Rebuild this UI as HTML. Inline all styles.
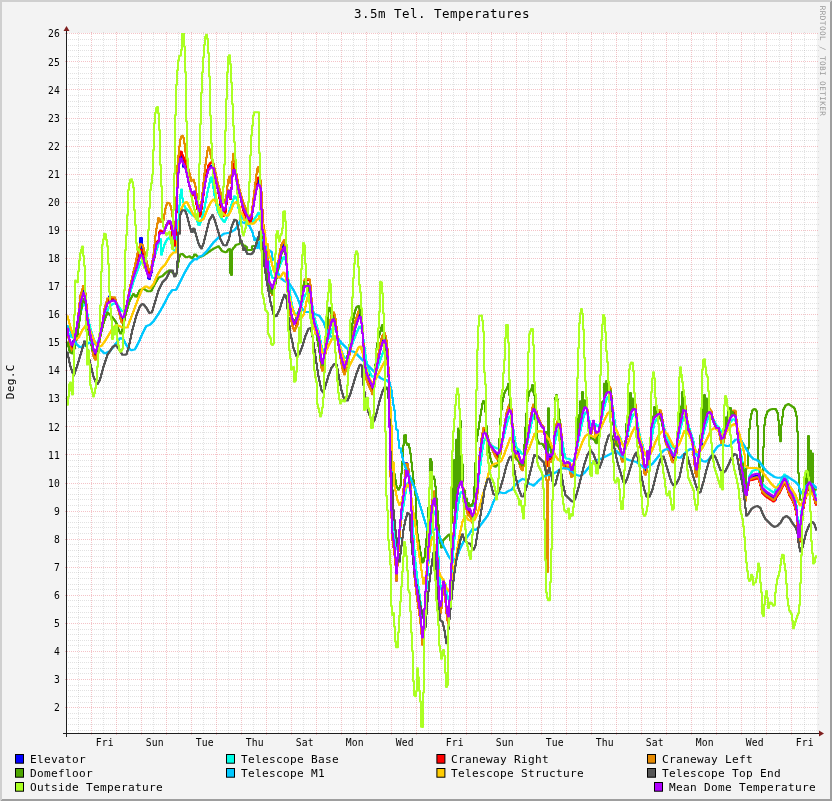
<!DOCTYPE html>
<html><head><meta charset="utf-8"><title>3.5m Tel. Temperatures</title>
<style>html,body{margin:0;padding:0;background:#f3f3f3;}body{width:832px;height:801px;overflow:hidden;}svg{display:block;will-change:transform;}text{font-family:"DejaVu Sans Mono","Liberation Mono",monospace;fill:#000;}.ax{font-size:9.72px;letter-spacing:0.15px;}.lg{font-size:11.11px;letter-spacing:0.31px;}.ti{font-size:12.5px;letter-spacing:0.47px;}.wm{font-size:7.64px;fill:#999;letter-spacing:0.43px;}.s{fill:none;stroke-width:2;stroke-linejoin:round;stroke-linecap:round;}</style></head><body>
<svg width="832" height="801" viewBox="0 0 832 801">
<rect x="0" y="0" width="832" height="801" fill="#f3f3f3"/>
<g shape-rendering="crispEdges">
<polygon points="0,0 832,0 830,2 2,2 2,799 0,801" fill="#cfcfcf"/>
<polygon points="832,801 0,801 2,799 830,799 830,2 832,0" fill="#9e9e9e"/>
<rect x="67" y="33" width="750" height="700" fill="#ffffff"/>
<g fill="none" stroke-width="1" stroke-dasharray="1 1"><path d="M66,730.5H819" stroke="rgba(143,143,143,0.26)"/><path d="M66,724.5H819" stroke="rgba(143,143,143,0.26)"/><path d="M66,718.5H819" stroke="rgba(143,143,143,0.26)"/><path d="M66,713.5H819" stroke="rgba(143,143,143,0.26)"/><path d="M66,702.5H819" stroke="rgba(143,143,143,0.26)"/><path d="M66,696.5H819" stroke="rgba(143,143,143,0.26)"/><path d="M66,690.5H819" stroke="rgba(143,143,143,0.26)"/><path d="M66,685.5H819" stroke="rgba(143,143,143,0.26)"/><path d="M66,673.5H819" stroke="rgba(143,143,143,0.26)"/><path d="M66,668.5H819" stroke="rgba(143,143,143,0.26)"/><path d="M66,662.5H819" stroke="rgba(143,143,143,0.26)"/><path d="M66,657.5H819" stroke="rgba(143,143,143,0.26)"/><path d="M66,645.5H819" stroke="rgba(143,143,143,0.26)"/><path d="M66,640.5H819" stroke="rgba(143,143,143,0.26)"/><path d="M66,634.5H819" stroke="rgba(143,143,143,0.26)"/><path d="M66,629.5H819" stroke="rgba(143,143,143,0.26)"/><path d="M66,617.5H819" stroke="rgba(143,143,143,0.26)"/><path d="M66,612.5H819" stroke="rgba(143,143,143,0.26)"/><path d="M66,606.5H819" stroke="rgba(143,143,143,0.26)"/><path d="M66,600.5H819" stroke="rgba(143,143,143,0.26)"/><path d="M66,589.5H819" stroke="rgba(143,143,143,0.26)"/><path d="M66,584.5H819" stroke="rgba(143,143,143,0.26)"/><path d="M66,578.5H819" stroke="rgba(143,143,143,0.26)"/><path d="M66,572.5H819" stroke="rgba(143,143,143,0.26)"/><path d="M66,561.5H819" stroke="rgba(143,143,143,0.26)"/><path d="M66,556.5H819" stroke="rgba(143,143,143,0.26)"/><path d="M66,550.5H819" stroke="rgba(143,143,143,0.26)"/><path d="M66,544.5H819" stroke="rgba(143,143,143,0.26)"/><path d="M66,533.5H819" stroke="rgba(143,143,143,0.26)"/><path d="M66,527.5H819" stroke="rgba(143,143,143,0.26)"/><path d="M66,522.5H819" stroke="rgba(143,143,143,0.26)"/><path d="M66,516.5H819" stroke="rgba(143,143,143,0.26)"/><path d="M66,505.5H819" stroke="rgba(143,143,143,0.26)"/><path d="M66,499.5H819" stroke="rgba(143,143,143,0.26)"/><path d="M66,494.5H819" stroke="rgba(143,143,143,0.26)"/><path d="M66,488.5H819" stroke="rgba(143,143,143,0.26)"/><path d="M66,477.5H819" stroke="rgba(143,143,143,0.26)"/><path d="M66,471.5H819" stroke="rgba(143,143,143,0.26)"/><path d="M66,466.5H819" stroke="rgba(143,143,143,0.26)"/><path d="M66,460.5H819" stroke="rgba(143,143,143,0.26)"/><path d="M66,449.5H819" stroke="rgba(143,143,143,0.26)"/><path d="M66,443.5H819" stroke="rgba(143,143,143,0.26)"/><path d="M66,438.5H819" stroke="rgba(143,143,143,0.26)"/><path d="M66,432.5H819" stroke="rgba(143,143,143,0.26)"/><path d="M66,421.5H819" stroke="rgba(143,143,143,0.26)"/><path d="M66,415.5H819" stroke="rgba(143,143,143,0.26)"/><path d="M66,410.5H819" stroke="rgba(143,143,143,0.26)"/><path d="M66,404.5H819" stroke="rgba(143,143,143,0.26)"/><path d="M66,393.5H819" stroke="rgba(143,143,143,0.26)"/><path d="M66,387.5H819" stroke="rgba(143,143,143,0.26)"/><path d="M66,381.5H819" stroke="rgba(143,143,143,0.26)"/><path d="M66,376.5H819" stroke="rgba(143,143,143,0.26)"/><path d="M66,365.5H819" stroke="rgba(143,143,143,0.26)"/><path d="M66,359.5H819" stroke="rgba(143,143,143,0.26)"/><path d="M66,353.5H819" stroke="rgba(143,143,143,0.26)"/><path d="M66,348.5H819" stroke="rgba(143,143,143,0.26)"/><path d="M66,337.5H819" stroke="rgba(143,143,143,0.26)"/><path d="M66,331.5H819" stroke="rgba(143,143,143,0.26)"/><path d="M66,325.5H819" stroke="rgba(143,143,143,0.26)"/><path d="M66,320.5H819" stroke="rgba(143,143,143,0.26)"/><path d="M66,308.5H819" stroke="rgba(143,143,143,0.26)"/><path d="M66,303.5H819" stroke="rgba(143,143,143,0.26)"/><path d="M66,297.5H819" stroke="rgba(143,143,143,0.26)"/><path d="M66,292.5H819" stroke="rgba(143,143,143,0.26)"/><path d="M66,280.5H819" stroke="rgba(143,143,143,0.26)"/><path d="M66,275.5H819" stroke="rgba(143,143,143,0.26)"/><path d="M66,269.5H819" stroke="rgba(143,143,143,0.26)"/><path d="M66,264.5H819" stroke="rgba(143,143,143,0.26)"/><path d="M66,252.5H819" stroke="rgba(143,143,143,0.26)"/><path d="M66,247.5H819" stroke="rgba(143,143,143,0.26)"/><path d="M66,241.5H819" stroke="rgba(143,143,143,0.26)"/><path d="M66,235.5H819" stroke="rgba(143,143,143,0.26)"/><path d="M66,224.5H819" stroke="rgba(143,143,143,0.26)"/><path d="M66,219.5H819" stroke="rgba(143,143,143,0.26)"/><path d="M66,213.5H819" stroke="rgba(143,143,143,0.26)"/><path d="M66,207.5H819" stroke="rgba(143,143,143,0.26)"/><path d="M66,196.5H819" stroke="rgba(143,143,143,0.26)"/><path d="M66,191.5H819" stroke="rgba(143,143,143,0.26)"/><path d="M66,185.5H819" stroke="rgba(143,143,143,0.26)"/><path d="M66,179.5H819" stroke="rgba(143,143,143,0.26)"/><path d="M66,168.5H819" stroke="rgba(143,143,143,0.26)"/><path d="M66,162.5H819" stroke="rgba(143,143,143,0.26)"/><path d="M66,157.5H819" stroke="rgba(143,143,143,0.26)"/><path d="M66,151.5H819" stroke="rgba(143,143,143,0.26)"/><path d="M66,140.5H819" stroke="rgba(143,143,143,0.26)"/><path d="M66,134.5H819" stroke="rgba(143,143,143,0.26)"/><path d="M66,129.5H819" stroke="rgba(143,143,143,0.26)"/><path d="M66,123.5H819" stroke="rgba(143,143,143,0.26)"/><path d="M66,112.5H819" stroke="rgba(143,143,143,0.26)"/><path d="M66,106.5H819" stroke="rgba(143,143,143,0.26)"/><path d="M66,101.5H819" stroke="rgba(143,143,143,0.26)"/><path d="M66,95.5H819" stroke="rgba(143,143,143,0.26)"/><path d="M66,84.5H819" stroke="rgba(143,143,143,0.26)"/><path d="M66,78.5H819" stroke="rgba(143,143,143,0.26)"/><path d="M66,73.5H819" stroke="rgba(143,143,143,0.26)"/><path d="M66,67.5H819" stroke="rgba(143,143,143,0.26)"/><path d="M66,56.5H819" stroke="rgba(143,143,143,0.26)"/><path d="M66,50.5H819" stroke="rgba(143,143,143,0.26)"/><path d="M66,45.5H819" stroke="rgba(143,143,143,0.26)"/><path d="M66,39.5H819" stroke="rgba(143,143,143,0.26)"/><path d="M78.5,32V734" stroke="rgba(143,143,143,0.26)"/><path d="M103.5,32V734" stroke="rgba(143,143,143,0.26)"/><path d="M128.5,32V734" stroke="rgba(143,143,143,0.26)"/><path d="M153.5,32V734" stroke="rgba(143,143,143,0.26)"/><path d="M178.5,32V734" stroke="rgba(143,143,143,0.26)"/><path d="M203.5,32V734" stroke="rgba(143,143,143,0.26)"/><path d="M228.5,32V734" stroke="rgba(143,143,143,0.26)"/><path d="M253.5,32V734" stroke="rgba(143,143,143,0.26)"/><path d="M278.5,32V734" stroke="rgba(143,143,143,0.26)"/><path d="M303.5,32V734" stroke="rgba(143,143,143,0.26)"/><path d="M328.5,32V734" stroke="rgba(143,143,143,0.26)"/><path d="M353.5,32V734" stroke="rgba(143,143,143,0.26)"/><path d="M378.5,32V734" stroke="rgba(143,143,143,0.26)"/><path d="M403.5,32V734" stroke="rgba(143,143,143,0.26)"/><path d="M428.5,32V734" stroke="rgba(143,143,143,0.26)"/><path d="M453.5,32V734" stroke="rgba(143,143,143,0.26)"/><path d="M478.5,32V734" stroke="rgba(143,143,143,0.26)"/><path d="M503.5,32V734" stroke="rgba(143,143,143,0.26)"/><path d="M528.5,32V734" stroke="rgba(143,143,143,0.26)"/><path d="M553.5,32V734" stroke="rgba(143,143,143,0.26)"/><path d="M578.5,32V734" stroke="rgba(143,143,143,0.26)"/><path d="M603.5,32V734" stroke="rgba(143,143,143,0.26)"/><path d="M628.5,32V734" stroke="rgba(143,143,143,0.26)"/><path d="M653.5,32V734" stroke="rgba(143,143,143,0.26)"/><path d="M678.5,32V734" stroke="rgba(143,143,143,0.26)"/><path d="M703.5,32V734" stroke="rgba(143,143,143,0.26)"/><path d="M728.5,32V734" stroke="rgba(143,143,143,0.26)"/><path d="M754.5,32V734" stroke="rgba(143,143,143,0.26)"/><path d="M779.5,32V734" stroke="rgba(143,143,143,0.26)"/><path d="M804.5,32V734" stroke="rgba(143,143,143,0.26)"/><path d="M65,707.5H819" stroke="rgba(222,79,90,0.34)"/><path d="M65,679.5H819" stroke="rgba(222,79,90,0.34)"/><path d="M65,651.5H819" stroke="rgba(222,79,90,0.34)"/><path d="M65,623.5H819" stroke="rgba(222,79,90,0.34)"/><path d="M65,595.5H819" stroke="rgba(222,79,90,0.34)"/><path d="M65,567.5H819" stroke="rgba(222,79,90,0.34)"/><path d="M65,539.5H819" stroke="rgba(222,79,90,0.34)"/><path d="M65,511.5H819" stroke="rgba(222,79,90,0.34)"/><path d="M65,483.5H819" stroke="rgba(222,79,90,0.34)"/><path d="M65,454.5H819" stroke="rgba(222,79,90,0.34)"/><path d="M65,426.5H819" stroke="rgba(222,79,90,0.34)"/><path d="M65,398.5H819" stroke="rgba(222,79,90,0.34)"/><path d="M65,370.5H819" stroke="rgba(222,79,90,0.34)"/><path d="M65,342.5H819" stroke="rgba(222,79,90,0.34)"/><path d="M65,314.5H819" stroke="rgba(222,79,90,0.34)"/><path d="M65,286.5H819" stroke="rgba(222,79,90,0.34)"/><path d="M65,258.5H819" stroke="rgba(222,79,90,0.34)"/><path d="M65,230.5H819" stroke="rgba(222,79,90,0.34)"/><path d="M65,202.5H819" stroke="rgba(222,79,90,0.34)"/><path d="M65,174.5H819" stroke="rgba(222,79,90,0.34)"/><path d="M65,146.5H819" stroke="rgba(222,79,90,0.34)"/><path d="M65,118.5H819" stroke="rgba(222,79,90,0.34)"/><path d="M65,89.5H819" stroke="rgba(222,79,90,0.34)"/><path d="M65,61.5H819" stroke="rgba(222,79,90,0.34)"/><path d="M65,33.5H819" stroke="rgba(222,79,90,0.34)"/><path d="M91.5,32V735" stroke="rgba(222,79,90,0.34)"/><path d="M116.5,32V735" stroke="rgba(222,79,90,0.34)"/><path d="M141.5,32V735" stroke="rgba(222,79,90,0.34)"/><path d="M166.5,32V735" stroke="rgba(222,79,90,0.34)"/><path d="M191.5,32V735" stroke="rgba(222,79,90,0.34)"/><path d="M216.5,32V735" stroke="rgba(222,79,90,0.34)"/><path d="M241.5,32V735" stroke="rgba(222,79,90,0.34)"/><path d="M266.5,32V735" stroke="rgba(222,79,90,0.34)"/><path d="M291.5,32V735" stroke="rgba(222,79,90,0.34)"/><path d="M316.5,32V735" stroke="rgba(222,79,90,0.34)"/><path d="M341.5,32V735" stroke="rgba(222,79,90,0.34)"/><path d="M366.5,32V735" stroke="rgba(222,79,90,0.34)"/><path d="M391.5,32V735" stroke="rgba(222,79,90,0.34)"/><path d="M416.5,32V735" stroke="rgba(222,79,90,0.34)"/><path d="M441.5,32V735" stroke="rgba(222,79,90,0.34)"/><path d="M466.5,32V735" stroke="rgba(222,79,90,0.34)"/><path d="M491.5,32V735" stroke="rgba(222,79,90,0.34)"/><path d="M516.5,32V735" stroke="rgba(222,79,90,0.34)"/><path d="M541.5,32V735" stroke="rgba(222,79,90,0.34)"/><path d="M566.5,32V735" stroke="rgba(222,79,90,0.34)"/><path d="M591.5,32V735" stroke="rgba(222,79,90,0.34)"/><path d="M616.5,32V735" stroke="rgba(222,79,90,0.34)"/><path d="M641.5,32V735" stroke="rgba(222,79,90,0.34)"/><path d="M666.5,32V735" stroke="rgba(222,79,90,0.34)"/><path d="M691.5,32V735" stroke="rgba(222,79,90,0.34)"/><path d="M716.5,32V735" stroke="rgba(222,79,90,0.34)"/><path d="M741.5,32V735" stroke="rgba(222,79,90,0.34)"/><path d="M766.5,32V735" stroke="rgba(222,79,90,0.34)"/><path d="M791.5,32V735" stroke="rgba(222,79,90,0.34)"/></g>
</g>
<g clip-path="url(#cp)"><defs><clipPath id="cp"><rect x="67" y="33" width="751" height="701"/></clipPath></defs><path class="s" stroke="#0000ff" d="M67,328.3H68V336.1H69V340.3H70V343.3H71V346.4H72V351.6H73V341.0H74V341.3H75V335.0H76V328.7H77V322.3H78V315.1H79V307.8H80V300.6H81V297.3H82V293.9H83V290.6H84V293.4H85V298.2H86V309.0H87V319.6H88V325.0H89V330.4H90V335.8H91V340.8H92V345.8H93V350.7H94V353.2H95V354.8H96V351.3H97V347.9H98V343.6H99V338.6H100V333.7H101V328.5H102V322.8H103V317.1H104V311.6H105V308.5H106V305.5H107V302.6H108V302.0H109V296.4H110V297.8H111V300.3H112V300.2H113V300.0H114V299.9H115V301.3H116V303.9H117V306.4H118V309.3H119V312.2H120V315.2H121V317.4H122V318.1H123V318.7H124V315.3H125V311.1H126V306.7H127V301.8H128V296.9H129V292.0H130V287.8H131V284.0H132V280.2H133V276.4H134V273.2H135V270.0H136V266.9H137V263.8H138V260.3H139V256.8H140V238.0H141V238.0H142V255.0H143V258.1H144V262.8H145V267.5H146V267.7H147V272.0H148V278.2H149V279.1H150V275.8H151V272.5H152V265.7H153V259.2H154V256.3H155V248.7H156V243.6H157V242.4H158V241.1H159V233.5H160V232.1H161V232.4H162V232.9H163V233.0H164V230.4H165V227.7H166V225.3H167V223.5H168V221.6H169V221.3H170V222.6H171V226.6H172V232.2H173V237.0H174V241.5H175V230.3H176V210.8H177V187.1H178V171.0H179V160.9H180V155.6H181V156.2H182V159.6H183V166.7H184V160.6H185V166.9H186V171.3H187V176.5H188V181.9H189V185.9H190V189.4H191V192.1H192V194.2H193V192.9H194V191.8H195V197.1H196V202.2H197V206.5H198V210.1H199V212.8H200V211.1H201V206.3H202V200.3H203V193.9H204V187.6H205V181.3H206V176.2H207V172.1H208V168.4H209V167.3H210V166.2H211V165.7H212V166.1H213V167.1H214V172.5H215V177.9H216V183.3H217V188.0H218V192.5H219V196.8H220V204.9H221V202.0H222V208.6H223V212.2H224V211.2H225V209.0H226V202.5H227V196.2H228V190.8H229V191.9H230V198.4H231V188.5H232V174.9H233V167.9H234V167.9H235V172.9H236V178.3H237V183.7H238V188.8H239V192.9H240V197.0H241V201.4H242V205.8H243V209.2H244V211.3H245V213.4H246V215.6H247V217.7H248V219.9H249V220.3H250V218.9H251V217.1H252V211.6H253V205.8H254V199.1H255V192.8H256V187.2H257V179.3H258V184.5H259V182.2H260V184.7H261V207.5H262V229.5H263V233.2H264V247.2H265V252.6H266V269.5H267V262.8H268V273.8H269V284.4H270V286.4H271V288.4H272V290.1H273V286.3H274V282.5H275V278.7H276V273.5H277V268.3H278V263.1H279V258.6H280V254.1H281V249.7H282V247.8H283V245.9H284V244.4H285V250.4H286V262.0H287V280.0H288V291.8H289V303.3H290V309.9H291V316.4H292V321.2H293V323.8H294V321.0H295V320.8H296V321.5H297V319.1H298V315.4H299V311.7H300V307.8H301V301.4H302V295.0H303V290.0H304V285.6H305V284.2H306V284.1H307V284.1H308V284.0H309V284.3H310V290.4H311V302.0H312V312.4H313V318.8H314V323.7H315V327.2H316V330.7H317V334.1H318V337.6H319V342.1H320V355.9H321V362.9H322V365.9H323V360.4H324V354.9H325V349.4H326V343.9H327V338.8H328V333.7H329V328.7H330V324.5H331V324.2H332V314.8H333V317.2H334V319.5H335V324.3H336V330.6H337V338.2H338V344.6H339V350.0H340V354.9H341V359.2H342V363.1H343V366.7H344V369.4H345V366.2H346V362.9H347V359.3H348V355.8H349V352.1H350V347.8H351V343.5H352V339.1H353V334.7H354V330.4H355V326.2H356V322.9H357V319.6H358V316.5H359V314.8H360V314.3H361V321.0H362V331.5H363V345.6H364V360.9H365V368.8H366V374.1H367V377.2H368V374.6H369V379.0H370V384.1H371V386.3H372V389.4H373V385.9H374V380.4H375V374.6H376V368.7H377V362.9H378V357.5H379V352.1H380V347.2H381V342.6H382V338.5H383V336.6H384V334.6H385V336.9H386V341.4H387V350.3H388V369.4H389V425.8H390V471.2H391V515.0H392V539.1H393V546.2H394V553.8H395V564.3H396V580.6H397V564.6H398V548.2H399V532.4H400V521.0H401V509.7H402V501.7H403V493.7H404V483.7H405V469.9H406V463.0H407V466.3H408V471.6H409V479.0H410V486.8H411V508.6H412V540.1H413V557.5H414V571.3H415V580.9H416V589.5H417V596.9H418V604.3H419V611.7H420V620.6H421V631.5H422V643.3H423V633.9H424V612.3H425V593.4H426V576.1H427V560.1H428V544.9H429V531.1H430V518.2H431V508.2H432V499.6H433V495.0H434V493.0H435V501.2H436V524.5H437V559.6H438V587.7H439V604.7H440V609.2H441V604.0H442V586.1H443V586.2H444V586.5H445V597.4H446V609.8H447V617.5H448V621.1H449V603.6H450V582.3H451V564.7H452V549.0H453V535.3H454V521.7H455V510.1H456V498.8H457V491.5H458V484.6H459V481.9H460V479.8H461V478.9H462V485.5H463V492.9H464V498.1H465V502.4H466V507.2H467V509.7H468V511.0H469V509.8H470V511.7H471V516.2H472V517.9H473V515.6H474V511.4H475V504.8H476V494.5H477V489.3H478V474.3H479V455.9H480V448.1H481V442.3H482V437.2H483V432.7H484V432.3H485V432.2H486V434.9H487V437.7H488V440.9H489V443.9H490V445.3H491V446.9H492V448.4H493V450.0H494V451.5H495V452.9H496V453.7H497V454.5H498V454.9H499V452.8H500V450.2H501V444.8H502V439.2H503V432.9H504V426.8H505V421.6H506V416.3H507V413.2H508V410.8H509V408.9H510V410.0H511V412.9H512V426.3H513V442.8H514V451.7H515V453.5H516V451.0H517V451.4H518V454.6H519V458.4H520V461.9H521V464.1H522V465.1H523V460.8H524V456.2H525V450.5H526V444.8H527V439.0H528V432.5H529V426.2H530V420.5H531V415.4H532V410.7H533V408.0H534V408.6H535V411.2H536V413.5H537V417.4H538V419.5H539V421.6H540V423.6H541V425.6H542V426.7H543V427.8H544V433.8H545V444.0H546V454.5H547V461.8H548V457.1H549V455.8H550V456.3H551V456.9H552V455.1H553V454.9H554V438.3H555V431.1H556V427.0H557V424.9H558V422.9H559V423.5H560V427.5H561V436.1H562V454.2H563V462.1H564V464.3H565V464.5H566V463.7H567V463.0H568V463.6H569V464.3H570V468.1H571V471.7H572V471.0H573V466.8H574V460.7H575V454.4H576V448.0H577V441.6H578V435.3H579V429.1H580V423.0H581V417.9H582V412.9H583V409.8H584V406.9H585V406.3H586V407.8H587V412.0H588V421.0H589V428.5H590V438.4H591V427.5H592V424.3H593V421.0H594V426.4H595V432.0H596V434.1H597V433.7H598V432.8H599V428.5H600V423.9H601V416.3H602V409.1H603V402.8H604V397.0H605V394.8H606V392.6H607V391.6H608V391.2H609V391.0H610V392.4H611V399.0H612V409.3H613V421.1H614V433.4H615V438.8H616V440.7H617V437.6H618V439.2H619V444.0H620V450.1H621V454.1H622V456.8H623V454.7H624V450.4H625V444.0H626V437.5H627V436.0H628V421.8H629V418.8H630V414.6H631V410.8H632V409.2H633V407.8H634V407.8H635V408.8H636V416.8H637V429.0H638V438.4H639V441.7H640V444.9H641V447.7H642V453.2H643V460.9H644V468.6H645V470.0H646V467.2H647V452.5H648V461.0H649V455.6H650V447.3H651V426.9H652V422.9H653V418.9H654V416.7H655V415.8H656V414.9H657V413.9H658V413.1H659V413.1H660V413.5H661V416.1H662V421.5H663V428.9H664V432.4H665V437.0H666V442.5H667V444.9H668V447.2H669V449.3H670V451.6H671V454.3H672V456.6H673V457.2H674V457.0H675V453.8H676V449.1H677V439.0H678V432.6H679V426.7H680V422.2H681V417.7H682V413.3H683V408.9H684V409.4H685V410.1H686V416.8H687V423.3H688V429.7H689V431.8H690V433.9H691V438.2H692V442.7H693V450.8H694V459.4H695V468.5H696V472.3H697V465.5H698V458.9H699V452.4H700V446.0H701V444.8H702V430.6H703V428.4H704V423.2H705V419.3H706V416.2H707V413.1H708V412.1H709V411.3H710V412.4H711V413.6H712V418.1H713V421.4H714V424.0H715V426.1H716V428.1H717V428.1H718V428.4H719V432.5H720V436.4H721V439.9H722V439.4H723V438.6H724V435.4H725V432.1H726V428.7H727V425.4H728V422.4H729V419.8H730V417.2H731V415.8H732V414.4H733V414.2H734V414.5H735V415.5H736V422.8H737V432.2H738V438.3H739V447.0H740V458.5H741V467.4H742V473.7H743V480.1H744V486.7H745V496.0H746V495.1H747V489.7H748V484.0H749V478.9H750V478.2H751V477.5H752V476.9H753V476.6H754V476.3H755V476.0H756V475.8H757V475.7H758V475.9H759V479.1H760V482.4H761V486.4H762V490.1H763V491.1H764V492.1H765V493.0H766V493.7H767V494.4H768V495.0H769V495.7H770V496.4H771V497.0H772V497.8H773V498.6H774V497.8H775V499.7H776V496.8H777V492.4H778V491.1H779V489.7H780V487.7H781V485.7H782V483.7H783V482.1H784V480.4H785V481.5H786V483.5H787V486.3H788V489.4H789V492.2H790V493.7H791V495.3H792V497.3H793V499.8H794V502.6H795V506.6H796V511.8H797V523.0H798V539.2H799V538.8H800V526.2H801V516.9H802V510.9H803V505.1H804V500.1H805V495.3H806V491.3H807V487.6H808V485.6H809V484.2H810V485.7H811V487.4H812V489.9H813V492.7H814V496.7H815V500.3H816V501.9"/>
<path class="s" stroke="#00ffe6" d="M67,333.4H68V333.4H69V334.4H70V335.3H71V336.9H72V337.3H73V336.9H74V335.5H75V333.0H76V329.7H77V326.0H78V321.8H79V317.5H80V313.6H81V309.8H82V306.3H83V304.2H84V303.9H85V305.6H86V309.3H87V314.3H88V319.4H89V324.4H90V328.5H91V331.9H92V335.3H93V338.4H94V341.1H95V342.6H96V343.0H97V342.2H98V340.2H99V337.2H100V334.1H101V330.7H102V326.9H103V323.0H104V319.3H105V315.8H106V312.7H107V310.2H108V308.3H109V306.8H110V305.7H111V304.9H112V304.3H113V303.7H114V303.5H115V303.6H116V304.1H117V305.0H118V306.3H119V307.8H120V309.3H121V310.4H122V311.3H123V311.3H124V310.3H125V308.5H126V305.8H127V302.5H128V298.8H129V295.2H130V291.6H131V288.1H132V284.7H133V281.6H134V278.6H135V275.8H136V273.1H137V270.4H138V267.8H139V265.1H140V263.0H141V261.4H142V260.6H143V260.8H144V262.1H145V263.8H146V265.8H147V267.9H148V269.5H149V270.0H150V269.7H151V268.0H152V265.1H153V261.8H154V257.8H155V253.7H156V250.2H157V247.3H158V243.8H159V241.0H160V238.9H161V254.8H162V251.3H163V247.8H164V244.5H165V242.5H166V240.5H167V239.0H168V238.3H169V237.6H170V239.5H171V243.5H172V247.5H173V249.4H174V250.6H175V251.8H176V245.7H177V233.7H178V219.6H179V205.4H180V194.4H181V189.5H182V198.2H183V202.6H184V205.9H185V207.9H186V208.9H187V209.9H188V210.9H189V211.9H190V212.9H191V213.9H192V214.9H193V215.7H194V216.4H195V217.2H196V218.7H197V221.7H198V224.7H199V224.9H200V222.6H201V220.1H202V216.0H203V211.9H204V207.8H205V202.6H206V197.2H207V192.0H208V187.5H209V183.0H210V178.5H211V177.3H212V182.3H213V188.2H214V195.2H215V200.8H216V205.5H217V210.2H218V212.7H219V214.7H220V216.7H221V218.2H222V219.7H223V221.2H224V221.9H225V219.9H226V217.9H227V215.9H228V213.4H229V210.4H230V207.4H231V204.4H232V201.6H233V199.0H234V196.3H235V197.1H236V198.4H237V203.4H238V208.0H239V211.4H240V214.7H241V217.1H242V218.1H243V219.1H244V220.1H245V221.1H246V222.1H247V223.1H248V224.1H249V223.8H250V223.3H251V222.8H252V222.1H253V220.6H254V219.1H255V217.6H256V216.1H257V214.4H258V212.7H259V215.3H260V220.8H261V228.1H262V236.1H263V244.1H264V252.1H265V243.8H266V249.0H267V255.1H268V261.2H269V266.9H270V270.5H271V275.3H272V277.8H273V278.0H274V277.4H275V275.9H276V273.5H277V271.2H278V268.9H279V266.5H280V263.9H281V261.6H282V259.5H283V257.5H284V257.1H285V259.4H286V264.4H287V271.4H288V280.1H289V288.7H290V296.2H291V302.2H292V307.0H293V310.7H294V313.1H295V314.2H296V314.2H297V313.3H298V311.7H299V310.0H300V307.8H301V305.2H302V302.3H303V299.2H304V296.4H305V294.4H306V293.2H307V292.7H308V292.8H309V294.0H310V296.8H311V301.1H312V306.2H313V312.1H314V317.4H315V321.7H316V325.1H317V328.2H318V331.1H319V335.4H320V340.5H321V345.6H322V349.1H323V351.3H324V350.8H325V348.4H326V344.8H327V341.6H328V338.6H329V335.7H330V333.1H331V330.7H332V328.8H333V327.9H334V328.1H335V329.5H336V332.1H337V335.7H338V339.7H339V343.6H340V347.3H341V350.6H342V353.4H343V356.0H344V357.5H345V358.0H346V357.5H347V356.1H348V353.7H349V351.3H350V348.7H351V346.0H352V343.3H353V340.6H354V338.0H355V335.5H356V333.1H357V330.7H358V328.4H359V326.7H360V326.5H361V328.5H362V332.9H363V339.7H364V347.6H365V355.1H366V361.4H367V366.1H368V369.2H369V371.5H370V373.5H371V375.6H372V376.7H373V376.8H374V375.9H375V373.9H376V370.7H377V367.7H378V365.1H379V362.3H380V359.5H381V356.5H382V353.8H383V351.1H384V349.7H385V350.0H386V352.7H387V359.2H388V376.0H389V398.6H390V428.4H391V461.0H392V491.3H393V513.1H394V530.7H395V543.3H396V548.4H397V549.2H398V545.7H399V538.6H400V527.3H401V518.4H402V511.6H403V505.8H404V499.7H405V493.2H406V487.4H407V483.5H408V482.8H409V485.4H410V493.5H411V506.3H412V520.5H413V535.4H414V550.2H415V562.6H416V571.5H417V579.4H418V586.8H419V594.3H420V602.1H421V610.8H422V616.4H423V616.6H424V611.6H425V602.3H426V588.8H427V575.2H428V563.0H429V551.9H430V541.3H431V531.0H432V521.8H433V514.6H434V511.4H435V514.4H436V524.3H437V538.8H438V556.6H439V573.8H440V585.7H441V589.6H442V588.9H443V585.5H444V583.3H445V584.3H446V589.3H447V596.1H448V599.2H449V596.3H450V588.4H451V576.8H452V562.4H453V549.4H454V538.5H455V528.2H456V518.9H457V510.2H458V503.1H459V497.2H460V493.2H461V491.9H462V492.5H463V494.3H464V496.8H465V500.1H466V502.3H467V503.8H468V504.4H469V504.8H470V505.3H471V505.9H472V506.0H473V505.7H474V504.1H475V500.5H476V495.7H477V489.3H478V481.7H479V473.3H480V464.9H481V456.4H482V449.1H483V443.8H484V440.3H485V438.6H486V438.3H487V439.2H488V440.7H489V442.4H490V443.9H491V445.2H492V446.1H493V446.7H494V447.3H495V447.8H496V448.3H497V448.6H498V448.4H499V447.8H500V446.4H501V444.3H502V441.2H503V437.5H504V433.4H505V429.1H506V424.9H507V421.4H508V418.5H509V416.7H510V416.2H511V418.4H512V423.5H513V430.1H514V436.8H515V443.1H516V447.2H517V448.7H518V449.6H519V450.6H520V451.8H521V453.2H522V454.0H523V453.7H524V452.2H525V449.6H526V446.0H527V442.0H528V437.5H529V432.8H530V428.0H531V423.3H532V419.1H533V416.1H534V414.4H535V414.0H536V415.1H537V417.0H538V419.1H539V421.2H540V423.2H541V424.8H542V426.3H543V428.3H544V431.4H545V435.6H546V440.6H547V444.7H548V447.8H549V449.7H550V450.4H551V449.9H552V449.5H553V447.1H554V443.8H555V439.8H556V435.6H557V431.6H558V429.9H559V429.5H560V431.1H561V435.9H562V442.0H563V448.2H564V453.7H565V457.7H566V458.8H567V458.8H568V458.7H569V459.0H570V459.9H571V460.8H572V461.0H573V460.2H574V458.1H575V454.6H576V450.4H577V445.7H578V440.8H579V435.8H580V430.8H581V425.9H582V421.4H583V417.5H584V414.5H585V412.6H586V412.3H587V413.8H588V416.9H589V420.9H590V424.0H591V425.6H592V425.3H593V424.7H594V424.0H595V424.1H596V425.0H597V426.3H598V426.3H599V425.1H600V422.7H601V419.2H602V414.9H603V410.3H604V405.9H605V402.2H606V399.4H607V397.6H608V396.8H609V396.5H610V397.7H611V400.7H612V405.8H613V412.5H614V419.7H615V426.1H616V430.5H617V433.1H618V434.8H619V436.6H620V438.6H621V441.5H622V443.8H623V444.8H624V444.3H625V442.3H626V439.0H627V435.1H628V430.7H629V426.4H630V422.3H631V418.9H632V416.2H633V414.5H634V413.7H635V414.8H636V418.1H637V423.0H638V428.4H639V434.0H640V438.6H641V441.9H642V444.8H643V448.7H644V452.4H645V455.3H646V455.3H647V455.4H648V453.3H649V449.9H650V444.0H651V439.7H652V433.6H653V427.8H654V423.0H655V421.0H656V419.5H657V418.4H658V417.8H659V417.3H660V417.4H661V418.6H662V421.2H663V425.0H664V429.2H665V433.3H666V436.9H667V439.6H668V441.4H669V443.0H670V444.6H671V446.1H672V447.3H673V448.3H674V448.6H675V447.9H676V445.6H677V442.3H678V438.1H679V433.5H680V428.8H681V424.8H682V420.9H683V418.2H684V416.2H685V416.2H686V417.9H687V421.3H688V424.9H689V428.8H690V432.2H691V435.1H692V438.0H693V441.6H694V446.6H695V451.6H696V454.8H697V455.9H698V455.0H699V451.7H700V446.8H701V442.3H702V438.0H703V433.7H704V429.7H705V425.9H706V422.4H707V419.6H708V417.5H709V416.2H710V415.6H711V416.2H712V417.5H713V419.5H714V421.6H715V423.8H716V425.3H717V426.2H718V427.3H719V428.6H720V430.2H721V431.7H722V433.0H723V433.4H724V433.0H725V431.7H726V430.0H727V427.9H728V425.9H729V423.9H730V422.1H731V420.7H732V419.7H733V419.2H734V419.3H735V420.8H736V424.1H737V429.1H738V435.2H739V442.4H740V449.6H741V456.2H742V462.0H743V467.5H744V473.6H745V478.6H746V495.1H747V488.7H748V482.0H749V475.9H750V474.2H751V472.5H752V470.9H753V470.6H754V470.3H755V470.0H756V469.8H757V469.7H758V469.9H759V473.1H760V476.4H761V480.4H762V484.1H763V485.1H764V486.1H765V487.0H766V487.7H767V488.4H768V489.0H769V489.7H770V490.4H771V491.0H772V491.8H773V492.6H774V491.8H775V489.7H776V487.8H777V486.4H778V485.1H779V483.7H780V481.7H781V479.7H782V477.7H783V476.1H784V474.4H785V475.5H786V477.5H787V480.3H788V483.4H789V486.2H790V487.7H791V489.3H792V491.3H793V493.8H794V496.6H795V500.6H796V505.8H797V517.0H798V533.2H799V532.8H800V520.2H801V510.9H802V504.9H803V499.1H804V494.1H805V489.3H806V485.3H807V481.6H808V479.6H809V478.2H810V479.7H811V481.4H812V483.9H813V486.7H814V490.7H815V494.3H816V495.9"/>
<path class="s" stroke="#ff0000" d="M67,327.6H68V336.9H69V342.1H70V346.0H71V349.9H72V350.3H73V347.5H74V344.4H75V337.1H76V329.8H77V322.4H78V313.9H79V305.4H80V297.0H81V293.1H82V289.2H83V286.1H84V288.7H85V293.9H86V306.4H87V318.8H88V325.0H89V331.3H90V337.5H91V343.3H92V349.0H93V354.7H94V357.5H95V359.3H96V355.2H97V351.2H98V346.2H99V340.5H100V334.9H101V329.1H102V322.7H103V316.3H104V310.1H105V306.8H106V303.6H107V300.5H108V300.0H109V299.5H110V299.0H111V298.6H112V298.6H113V298.6H114V298.5H115V300.3H116V303.4H117V306.5H118V309.9H119V313.5H120V317.1H121V319.8H122V320.8H123V321.7H124V318.0H125V313.4H126V305.9H127V300.8H128V295.8H129V290.7H130V286.3H131V282.2H132V278.2H133V274.2H134V270.7H135V266.8H136V263.0H137V259.1H138V255.8H139V252.5H140V249.5H141V250.0H142V250.5H143V253.3H144V257.5H145V261.7H146V266.0H147V269.4H148V272.8H149V274.0H150V271.4H151V268.7H152V262.8H153V260.1H154V257.0H155V248.4H156V242.8H157V241.6H158V240.4H159V231.9H160V230.5H161V231.1H162V231.9H163V232.4H164V229.7H165V227.1H166V224.9H167V223.3H168V221.7H169V221.9H170V224.0H171V229.0H172V236.0H173V241.7H174V245.7H175V234.9H176V212.6H177V185.5H178V167.1H179V156.4H180V151.4H181V151.9H182V154.9H183V157.3H184V159.7H185V163.6H186V168.9H187V175.0H188V181.5H189V186.1H190V190.1H191V193.1H192V195.4H193V193.7H194V192.3H195V198.4H196V204.2H197V209.2H198V213.3H199V216.5H200V214.6H201V209.1H202V202.3H203V194.9H204V187.7H205V180.4H206V174.6H207V169.8H208V165.5H209V164.2H210V162.9H211V162.3H212V162.8H213V163.9H214V170.2H215V176.5H216V182.8H217V188.2H218V193.3H219V198.2H220V202.9H221V207.7H222V211.9H223V216.0H224V214.7H225V212.0H226V204.3H227V197.0H228V190.6H229V191.8H230V199.1H231V187.6H232V171.8H233V163.6H234V163.5H235V169.3H236V175.5H237V181.6H238V187.5H239V192.2H240V196.8H241V201.8H242V206.9H243V210.7H244V213.2H245V215.6H246V218.0H247V220.4H248V222.9H249V223.1H250V221.2H251V218.9H252V212.1H253V205.1H254V196.9H255V189.3H256V182.4H257V179.1H258V177.6H259V178.5H260V181.0H261V203.7H262V228.7H263V232.6H264V248.5H265V254.4H266V273.6H267V265.5H268V277.8H269V289.0H270V291.0H271V293.0H272V294.8H273V290.3H274V285.6H275V280.8H276V274.4H277V268.0H278V261.6H279V256.2H280V250.6H281V245.3H282V243.2H283V241.5H284V240.2H285V245.9H286V258.4H287V279.1H288V292.5H289V305.6H290V313.0H291V320.5H292V325.8H293V328.5H294V330.7H295V328.1H296V325.3H297V322.3H298V317.7H299V313.2H300V308.4H301V300.9H302V293.4H303V287.4H304V282.3H305V280.5H306V280.4H307V280.2H308V279.9H309V280.1H310V286.7H311V300.0H312V311.8H313V318.8H314V324.3H315V328.0H316V331.8H317V335.5H318V339.3H319V344.2H320V360.1H321V367.5H322V370.4H323V364.6H324V358.1H325V351.6H326V345.0H327V338.9H328V332.8H329V326.9H330V321.8H331V316.7H332V313.8H333V313.0H334V315.6H335V321.3H336V328.6H337V337.3H338V344.8H339V351.0H340V356.6H341V361.6H342V366.2H343V370.3H344V373.5H345V369.7H346V365.9H347V361.8H348V357.7H349V353.5H350V348.6H351V343.5H352V338.4H353V333.3H354V328.2H355V323.2H356V319.3H357V315.4H358V311.8H359V310.3H360V309.9H361V316.4H362V328.5H363V344.5H364V362.1H365V371.1H366V377.1H367V380.6H368V383.2H369V385.8H370V388.1H371V390.6H372V393.9H373V389.8H374V383.3H375V376.4H376V369.4H377V362.2H378V355.4H379V348.3H380V342.8H381V339.1H382V335.7H383V334.5H384V333.2H385V335.9H386V340.5H387V349.2H388V367.4H389V423.4H390V475.0H391V517.4H392V540.1H393V547.0H394V554.4H395V564.6H396V580.6H397V565.6H398V550.9H399V536.7H400V523.6H401V509.4H402V499.2H403V489.3H404V479.7H405V470.8H406V463.7H407V464.2H408V469.3H409V476.3H410V483.7H411V504.1H412V539.2H413V558.8H414V574.5H415V585.1H416V594.0H417V601.0H418V608.0H419V615.0H420V623.3H421V633.4H422V644.4H423V635.8H424V615.8H425V597.7H426V577.4H427V558.8H428V541.0H429V527.0H430V515.0H431V505.7H432V497.7H433V493.3H434V491.5H435V499.0H436V520.5H437V558.8H438V591.4H439V608.7H440V612.8H441V607.9H442V594.5H443V586.5H444V590.4H445V601.8H446V613.2H447V620.3H448V623.5H449V607.2H450V586.6H451V566.8H452V549.3H453V534.1H454V519.0H455V506.1H456V494.3H457V487.3H458V480.7H459V477.9H460V475.7H461V474.6H462V481.5H463V490.5H464V497.0H465V502.4H466V508.3H467V511.6H468V513.5H469V512.5H470V515.0H471V520.5H472V522.6H473V520.3H474V515.9H475V508.6H476V497.0H477V491.3H478V474.3H479V458.1H480V449.6H481V440.3H482V435.0H483V430.3H484V430.0H485V430.2H486V433.3H487V436.5H488V440.1H489V443.5H490V445.2H491V447.2H492V449.2H493V451.1H494V453.1H495V454.9H496V455.9H497V457.0H498V457.6H499V455.3H500V452.4H501V446.1H502V439.6H503V432.5H504V425.9H505V420.3H506V414.6H507V411.2H508V408.6H509V406.5H510V407.6H511V410.8H512V425.2H513V443.4H514V453.7H515V455.8H516V457.4H517V456.8H518V457.0H519V461.4H520V465.5H521V468.0H522V469.2H523V464.2H524V458.9H525V452.4H526V445.9H527V439.4H528V432.3H529V425.5H530V419.5H531V414.0H532V409.0H533V406.2H534V406.8H535V409.6H536V412.1H537V416.4H538V418.6H539V420.8H540V423.0H541V425.1H542V426.2H543V427.4H544V433.9H545V445.6H546V457.7H547V466.0H548V460.5H549V458.8H550V459.2H551V459.6H552V457.3H553V451.0H554V434.6H555V429.9H556V425.3H557V422.9H558V420.7H559V421.3H560V425.6H561V434.9H562V454.7H563V463.9H564V466.5H565V466.8H566V466.0H567V465.2H568V465.9H569V466.8H570V471.3H571V475.5H572V474.8H573V470.0H574V463.3H575V456.2H576V449.1H577V441.8H578V435.0H579V428.4H580V421.9H581V416.5H582V411.2H583V408.0H584V405.0H585V404.5H586V406.3H587V410.9H588V420.7H589V429.3H590V436.4H591V432.0H592V425.0H593V421.4H594V427.8H595V434.5H596V437.0H597V436.5H598V435.7H599V430.7H600V425.4H601V416.7H602V408.6H603V401.9H604V395.5H605V393.1H606V390.7H607V389.6H608V389.1H609V388.8H610V390.2H611V397.3H612V408.3H613V421.1H614V435.0H615V441.2H616V443.3H617V439.5H618V441.3H619V446.8H620V453.6H621V458.2H622V461.2H623V458.7H624V453.6H625V446.1H626V438.4H627V431.0H628V424.2H629V417.7H630V413.1H631V408.9H632V407.1H633V405.5H634V405.5H635V406.6H636V415.2H637V428.3H638V438.7H639V442.5H640V446.3H641V449.6H642V455.9H643V464.8H644V473.2H645V474.5H646V471.9H647V455.1H648V464.8H649V458.6H650V449.1H651V426.2H652V421.9H653V417.6H654V415.2H655V414.3H656V413.3H657V412.3H658V411.5H659V411.5H660V412.0H661V414.8H662V420.6H663V428.6H664V436.8H665V440.9H666V443.7H667V446.4H668V449.0H669V451.5H670V454.1H671V457.3H672V460.0H673V460.6H674V460.5H675V456.7H676V451.3H677V439.6H678V432.4H679V426.1H680V421.2H681V416.4H682V411.5H683V406.7H684V407.2H685V407.9H686V415.1H687V422.2H688V429.1H689V431.4H690V433.8H691V438.6H692V443.8H693V453.2H694V463.2H695V473.0H696V476.6H697V470.3H698V462.6H699V455.1H700V447.7H701V440.5H702V433.5H703V427.9H704V422.3H705V418.2H706V414.8H707V411.6H708V410.7H709V409.8H710V411.1H711V412.5H712V417.4H713V421.0H714V423.8H715V426.2H716V428.6H717V428.6H718V429.0H719V433.7H720V438.2H721V442.3H722V441.6H723V440.8H724V436.9H725V433.0H726V428.9H727V425.2H728V421.9H729V418.8H730V415.9H731V414.3H732V412.6H733V412.2H734V412.3H735V413.2H736V421.0H737V431.0H738V441.8H739V450.0H740V459.5H741V469.4H742V476.4H743V483.4H744V490.7H745V500.6H746V495.1H747V490.2H748V485.0H749V480.4H750V480.2H751V480.0H752V479.9H753V479.6H754V479.3H755V479.0H756V478.8H757V478.7H758V478.9H759V482.1H760V485.4H761V489.4H762V493.1H763V494.1H764V495.1H765V496.0H766V496.7H767V497.4H768V498.0H769V498.7H770V499.4H771V500.0H772V500.8H773V501.6H774V500.8H775V498.7H776V496.8H777V495.4H778V494.1H779V492.7H780V490.7H781V488.7H782V486.7H783V485.1H784V483.4H785V484.5H786V486.5H787V489.3H788V492.4H789V495.2H790V496.7H791V498.3H792V500.3H793V502.8H794V505.6H795V509.6H796V514.8H797V526.0H798V542.2H799V541.8H800V529.2H801V519.9H802V513.9H803V508.1H804V503.1H805V498.3H806V494.3H807V490.6H808V488.6H809V487.2H810V488.7H811V490.4H812V492.9H813V495.7H814V499.7H815V503.3H816V504.9"/>
<path class="s" stroke="#e68a00" d="M67,327.0H68V337.7H69V343.8H70V348.3H71V351.8H72V351.8H73V349.3H74V346.8H75V339.1H76V330.8H77V322.5H78V312.9H79V303.3H80V295.3H81V292.3H82V289.2H83V286.1H84V288.7H85V293.2H86V304.2H87V318.0H88V325.0H89V332.0H90V339.0H91V345.4H92V351.3H93V355.9H94V358.2H95V359.7H96V356.5H97V353.3H98V348.5H99V342.2H100V336.0H101V329.6H102V322.6H103V315.6H104V308.8H105V305.3H106V301.9H107V298.6H108V298.3H109V297.9H110V297.4H111V297.1H112V297.2H113V297.3H114V297.3H115V299.4H116V303.0H117V306.6H118V310.5H119V314.6H120V318.8H121V322.0H122V323.1H123V324.3H124V320.4H125V315.3H126V305.9H127V300.4H128V295.0H129V289.6H130V284.8H131V280.4H132V275.9H133V271.5H134V267.7H135V263.0H136V258.3H137V253.6H138V250.3H139V247.0H140V244.0H141V244.5H142V245.0H143V247.8H144V252.0H145V256.2H146V261.0H147V264.9H148V268.8H149V270.5H150V268.4H151V266.2H152V260.8H153V254.2H154V244.9H155V235.5H156V228.6H157V223.2H158V217.9H159V219.1H160V222.1H161V221.8H162V221.1H163V219.9H164V213.9H165V208.5H166V205.0H167V202.8H168V203.1H169V203.5H170V205.8H171V209.8H172V216.5H173V224.5H174V232.5H175V221.2H176V196.9H177V165.6H178V155.6H179V146.2H180V139.3H181V136.6H182V135.7H183V137.7H184V143.4H185V151.8H186V158.7H187V164.7H188V169.2H189V173.2H190V177.2H191V181.1H192V180.1H193V179.7H194V182.7H195V186.8H196V193.8H197V199.9H198V204.5H199V209.2H200V207.6H201V201.6H202V192.8H203V182.8H204V173.6H205V164.6H206V157.5H207V150.8H208V147.1H209V149.0H210V154.2H211V158.2H212V161.8H213V164.8H214V168.3H215V172.3H216V177.0H217V182.0H218V185.7H219V189.0H220V192.3H221V195.9H222V199.4H223V202.9H224V201.8H225V199.5H226V194.7H227V185.7H228V179.6H229V176.5H230V182.9H231V175.1H232V161.5H233V153.7H234V160.2H235V167.1H236V174.0H237V179.4H238V184.7H239V189.6H240V193.1H241V196.6H242V200.1H243V203.0H244V205.5H245V208.0H246V210.5H247V212.9H248V215.2H249V217.6H250V216.2H251V214.2H252V206.2H253V198.2H254V190.2H255V182.2H256V174.2H257V168.6H258V167.0H259V172.0H260V180.3H261V191.9H262V209.8H263V224.8H264V235.2H265V245.1H266V251.8H267V258.4H268V278.9H269V289.0H270V291.0H271V293.0H272V294.8H273V291.4H274V288.1H275V282.7H276V275.2H277V267.8H278V260.4H279V254.0H280V248.7H281V244.8H282V243.2H283V241.5H284V240.2H285V245.9H286V256.7H287V278.2H288V293.1H289V307.7H290V315.4H291V321.5H292V326.0H293V328.5H294V330.7H295V328.7H296V326.7H297V324.6H298V319.8H299V314.5H300V309.0H301V300.4H302V291.9H303V285.2H304V280.2H305V278.9H306V278.9H307V278.9H308V278.9H309V279.4H310V285.1H311V298.1H312V311.1H313V318.9H314V324.8H315V328.8H316V332.8H317V336.7H318V340.8H319V346.1H320V361.0H321V367.5H322V370.4H323V365.4H324V360.4H325V353.4H326V346.0H327V339.0H328V332.1H329V325.3H330V319.5H331V314.9H332V312.7H333V312.2H334V314.3H335V318.8H336V326.7H337V336.6H338V344.9H339V351.9H340V358.2H341V363.8H342V368.7H343V372.0H344V374.5H345V371.5H346V368.5H347V363.9H348V359.4H349V354.8H350V349.3H351V343.6H352V337.9H353V332.0H354V326.2H355V320.6H356V317.6H357V314.6H358V311.8H359V310.3H360V309.9H361V316.1H362V326.0H363V343.6H364V363.2H365V373.1H366V379.7H367V382.6H368V385.0H369V387.2H370V389.2H371V391.3H372V394.2H373V391.1H374V385.8H375V378.0H376V370.0H377V361.6H378V353.5H379V346.9H380V342.8H381V339.1H382V335.7H383V334.5H384V333.2H385V335.9H386V340.5H387V349.2H388V367.4H389V421.2H390V476.4H391V517.4H392V540.1H393V547.0H394V554.4H395V564.6H396V580.6H397V565.6H398V550.9H399V536.7H400V526.0H401V509.2H402V497.1H403V488.7H404V479.7H405V470.8H406V463.7H407V464.2H408V469.3H409V476.3H410V483.7H411V504.1H412V538.4H413V560.0H414V576.9H415V585.9H416V594.0H417V601.0H418V608.0H419V615.0H420V623.3H421V633.4H422V644.4H423V635.8H424V615.8H425V598.4H426V578.7H427V557.6H428V539.7H429V527.0H430V515.0H431V505.7H432V497.7H433V493.3H434V491.5H435V499.0H436V520.5H437V558.0H438V593.0H439V608.7H440V612.8H441V607.9H442V595.1H443V588.6H444V591.7H445V601.8H446V613.2H447V620.3H448V623.5H449V607.2H450V587.2H451V568.7H452V549.6H453V533.1H454V516.6H455V505.0H456V494.3H457V487.3H458V480.7H459V477.9H460V475.7H461V474.6H462V480.4H463V488.4H464V496.0H465V502.3H466V509.3H467V513.3H468V515.7H469V514.8H470V517.2H471V521.1H472V522.6H473V520.3H474V516.3H475V510.0H476V499.2H477V493.1H478V474.3H479V456.4H480V448.3H481V438.6H482V433.0H483V428.1H484V428.0H485V428.4H486V431.9H487V435.4H488V439.4H489V443.2H490V445.2H491V447.5H492V449.9H493V452.2H494V454.5H495V456.6H496V457.9H497V459.2H498V460.0H499V457.5H500V454.3H501V447.3H502V440.0H503V432.2H504V425.2H505V419.1H506V413.1H507V409.5H508V406.6H509V404.4H510V405.5H511V408.9H512V424.3H513V443.8H514V455.4H515V457.7H516V459.6H517V458.9H518V459.1H519V464.0H520V467.2H521V469.2H522V470.2H523V466.2H524V461.3H525V454.0H526V446.9H527V439.7H528V432.1H529V424.9H530V418.6H531V412.8H532V407.5H533V404.5H534V405.2H535V408.3H536V411.0H537V415.5H538V417.8H539V420.2H540V422.4H541V424.7H542V425.8H543V427.1H544V433.9H545V447.1H546V480.0H547V572.0H548V480.0H549V461.4H550V461.8H551V462.0H552V459.2H553V452.0H554V433.9H555V428.9H556V423.9H557V421.3H558V418.8H559V419.4H560V424.0H561V433.9H562V455.2H563V465.4H564V468.4H565V468.8H566V468.0H567V467.1H568V467.9H569V469.0H570V473.7H571V476.9H572V476.2H573V472.2H574V465.5H575V457.7H576V450.0H577V442.0H578V434.7H579V427.8H580V421.0H581V415.3H582V409.8H583V406.5H584V403.4H585V402.9H586V404.9H587V409.9H588V420.4H589V430.0H590V438.1H591V433.3H592V425.7H593V421.8H594V429.1H595V436.6H596V439.5H597V439.1H598V438.2H599V432.7H600V426.7H601V416.9H602V408.2H603V401.0H604V394.2H605V391.6H606V389.0H607V387.8H608V387.2H609V386.8H610V388.3H611V395.7H612V407.4H613V421.0H614V436.5H615V443.3H616V445.6H617V441.2H618V443.1H619V449.2H620V455.4H621V459.2H622V461.7H623V459.9H624V455.9H625V447.9H626V439.3H627V430.9H628V423.6H629V416.7H630V411.8H631V407.2H632V405.2H633V403.5H634V403.4H635V404.6H636V413.8H637V427.8H638V438.9H639V443.3H640V447.5H641V451.2H642V458.4H643V466.0H644V473.2H645V474.5H646V471.9H647V457.3H648V466.2H649V461.2H650V450.6H651V425.5H652V420.9H653V416.4H654V413.8H655V412.9H656V411.9H657V410.9H658V410.0H659V410.1H660V410.6H661V413.6H662V419.8H663V428.3H664V437.2H665V441.7H666V444.7H667V447.8H668V450.6H669V453.4H670V456.3H671V459.9H672V462.0H673V462.5H674V462.4H675V459.3H676V453.2H677V440.1H678V432.3H679V425.5H680V420.3H681V415.1H682V409.9H683V404.7H684V405.2H685V406.0H686V413.7H687V421.3H688V428.7H689V431.1H690V433.7H691V438.9H692V444.8H693V455.3H694V464.6H695V473.0H696V476.6H697V470.3H698V464.2H699V457.4H700V449.2H701V441.2H702V433.4H703V427.5H704V421.6H705V417.2H706V413.7H707V410.3H708V409.4H709V408.6H710V410.0H711V411.6H712V416.8H713V420.7H714V423.7H715V426.3H716V429.0H717V429.1H718V429.5H719V434.7H720V439.8H721V444.4H722V443.6H723V442.6H724V438.3H725V433.8H726V429.2H727V425.0H728V421.4H729V418.0H730V414.8H731V412.9H732V411.0H733V410.4H734V410.4H735V411.2H736V419.4H737V430.0H738V441.3H739V449.9H740V460.3H741V471.1H742V478.7H743V485.5H744V491.8H745V500.6H746V495.1H747V489.9H748V484.5H749V479.6H750V479.2H751V478.8H752V478.4H753V478.1H754V477.8H755V477.5H756V477.3H757V477.2H758V477.4H759V480.6H760V483.9H761V487.9H762V491.6H763V492.6H764V493.6H765V494.5H766V495.2H767V495.9H768V496.5H769V497.2H770V497.9H771V498.5H772V499.3H773V500.1H774V499.3H775V497.2H776V495.3H777V493.9H778V492.6H779V491.2H780V489.2H781V487.2H782V485.2H783V483.6H784V481.9H785V483.0H786V485.0H787V487.8H788V490.9H789V493.7H790V495.2H791V496.8H792V498.8H793V501.3H794V504.1H795V508.1H796V513.3H797V524.5H798V540.7H799V540.3H800V527.7H801V518.4H802V512.4H803V506.6H804V501.6H805V496.8H806V492.8H807V489.1H808V487.1H809V485.7H810V487.2H811V488.9H812V491.4H813V494.2H814V498.2H815V501.8H816V503.4"/>
<path class="s" stroke="#4ea600" d="M67,342.4H68V346.4H69V350.4H70V352.6H71V353.1H72V353.6H73V351.1H74V348.6H75V344.8H76V339.8H77V334.7H78V327.7H79V320.7H80V314.3H81V308.3H82V302.4H83V300.4H84V298.4H85V303.2H86V314.2H87V325.0H88V330.0H89V335.0H90V340.0H91V345.0H92V349.9H93V350.5H94V351.2H95V351.9H96V351.2H97V347.2H98V343.2H99V339.2H100V335.2H101V331.2H102V327.2H103V323.2H104V320.2H105V317.6H106V314.9H107V312.5H108V313.5H109V314.5H110V315.5H111V316.5H112V317.5H113V318.8H114V320.1H115V321.5H116V323.3H117V326.3H118V329.3H119V331.5H120V333.5H121V333.5H122V329.2H123V324.5H124V319.5H125V314.6H126V311.3H127V308.0H128V304.6H129V301.3H130V298.9H131V297.3H132V295.6H133V293.9H134V294.9H135V296.4H136V296.7H137V294.7H138V292.7H139V290.7H140V289.7H141V289.4H142V289.1H143V288.7H144V289.2H145V289.9H146V290.6H147V291.2H148V291.2H149V291.2H150V291.2H151V290.5H152V288.5H153V286.5H154V284.5H155V282.7H156V281.0H157V279.3H158V277.7H159V277.2H160V276.8H161V276.5H162V276.1H163V275.1H164V274.1H165V273.1H166V272.2H167V271.5H168V270.9H169V270.2H170V270.6H171V271.6H172V272.6H173V273.6H174V274.6H175V275.6H176V273.7H177V267.2H178V261.7H179V256.7H180V254.6H181V254.1H182V253.9H183V254.9H184V255.9H185V256.9H186V257.3H187V257.0H188V256.7H189V256.3H190V256.9H191V257.9H192V258.4H193V256.4H194V254.4H195V254.4H196V255.4H197V256.4H198V257.4H199V257.2H200V256.8H201V256.5H202V256.1H203V255.4H204V254.8H205V254.1H206V253.4H207V252.8H208V252.1H209V251.4H210V250.8H211V250.1H212V249.4H213V248.8H214V248.3H215V247.8H216V247.3H217V246.8H218V246.3H219V247.5H220V248.8H221V250.2H222V251.3H223V251.6H224V252.0H225V252.3H226V251.9H227V250.8H228V249.6H229V249.1H230V272.9H231V274.9H232V249.4H233V248.1H234V246.9H235V245.6H236V244.8H237V244.5H238V244.2H239V243.8H240V239.9H241V241.9H242V243.9H243V245.8H244V245.6H245V246.3H246V247.0H247V249.9H248V249.9H249V249.9H250V249.9H251V249.9H252V246.2H253V246.1H254V246.0H255V245.9H256V242.6H257V240.2H258V238.0H259V239.6H260V233.3H261V236.2H262V246.1H263V253.1H264V260.1H265V265.4H266V270.7H267V276.0H268V280.7H269V285.4H270V290.0H271V292.0H272V293.7H273V290.4H274V287.1H275V283.7H276V278.3H277V273.0H278V267.7H279V263.0H280V258.4H281V253.8H282V251.8H283V249.8H284V248.3H285V254.5H286V264.7H287V279.7H288V291.3H289V302.3H290V308.9H291V314.7H292V318.6H293V320.3H294V321.7H295V319.7H296V317.7H297V315.6H298V312.3H299V309.0H300V305.4H301V298.7H302V292.0H303V286.5H304V281.9H305V282.6H306V283.3H307V284.1H308V287.1H309V290.9H310V303.2H311V318.1H312V321.2H313V324.3H314V327.5H315V330.8H316V334.4H317V340.3H318V346.1H319V352.1H320V358.1H321V362.5H322V365.3H323V359.3H324V353.2H325V345.7H326V338.2H327V325.4H328V311.6H329V307.8H330V308.5H331V313.5H332V316.7H333V318.2H334V321.3H335V325.8H336V331.6H337V338.6H338V344.5H339V349.5H340V354.0H341V358.0H342V361.7H343V365.0H344V367.5H345V364.5H346V361.2H347V355.9H348V350.6H349V345.0H350V337.7H351V330.3H352V323.3H353V318.3H354V313.3H355V310.1H356V307.6H357V306.6H358V306.1H359V308.8H360V313.2H361V322.0H362V333.0H363V346.1H364V360.3H365V367.7H366V372.7H367V375.6H368V378.0H369V380.2H370V382.2H371V384.3H372V387.2H373V384.1H374V379.1H375V364.6H376V349.0H377V343.0H378V337.5H379V334.5H380V331.3H381V327.3H382V325.0H383V331.3H384V337.5H385V343.8H386V352.6H387V362.4H388V376.7H389V418.8H390V441.7H391V451.8H392V462.0H393V468.0H394V474.0H395V480.0H396V485.9H397V487.9H398V489.8H399V487.8H400V485.5H401V473.5H402V461.4H403V445.2H404V435.6H405V435.1H406V443.0H407V445.1H408V444.0H409V447.8H410V453.6H411V462.2H412V471.2H413V480.1H414V487.1H415V494.9H416V520.6H417V534.2H418V540.2H419V546.2H420V552.2H421V558.1H422V562.4H423V561.5H424V557.4H425V548.4H426V539.1H427V524.1H428V507.7H429V488.2H430V458.9H431V461.7H432V477.4H433V476.4H434V479.2H435V486.6H436V498.6H437V510.9H438V524.9H439V538.3H440V543.3H441V547.6H442V543.6H443V539.9H444V538.9H445V537.9H446V536.9H447V535.9H448V534.9H449V534.6H450V540.3H451V523.0H452V508.3H453V487.5H454V460.1H455V510.0H456V439.7H457V492.3H458V428.5H459V482.9H460V420.9H461V479.6H462V464.6H463V492.0H464V490.4H465V500.4H466V498.4H467V506.9H468V503.1H469V506.6H470V505.1H471V505.8H472V503.8H473V500.6H474V487.1H475V463.1H476V441.2H477V435.2H478V429.1H479V422.1H480V415.2H481V409.2H482V403.6H483V401.1H484V403.7H485V411.7H486V426.0H487V437.2H488V446.7H489V452.7H490V458.3H491V461.8H492V465.0H493V465.6H494V466.3H495V466.7H496V465.7H497V464.7H498V460.8H499V438.8H500V418.6H501V409.6H502V401.3H503V397.2H504V393.0H505V390.8H506V389.3H507V387.0H508V383.7H509V394.9H510V406.3H511V417.8H512V429.8H513V440.8H514V446.8H515V452.8H516V458.1H517V459.6H518V461.1H519V462.6H520V464.0H521V464.6H522V465.3H523V462.8H524V444.8H525V427.5H526V413.5H527V401.1H528V396.1H529V391.8H530V390.8H531V389.0H532V384.9H533V391.9H534V395.2H535V419.6H536V414.7H537V439.9H538V441.9H539V443.8H540V443.8H541V443.8H542V443.9H543V445.6H544V447.3H545V449.0H546V432.0H547V458.3H548V408.2H549V442.2H550V447.6H551V452.9H552V454.1H553V448.8H554V419.0H555V397.8H556V394.9H557V399.3H558V409.0H559V420.3H560V430.3H561V440.5H562V454.9H563V461.3H564V463.3H565V463.4H566V462.7H567V462.0H568V462.5H569V463.2H570V466.7H571V469.9H572V469.2H573V465.2H574V459.6H575V453.6H576V446.9H577V439.5H578V415.3H579V427.4H580V401.2H581V416.5H582V392.1H583V408.6H584V400.2H585V405.2H586V407.9H587V412.6H588V421.1H589V427.5H590V432.9H591V437.9H592V438.6H593V439.2H594V440.0H595V442.0H596V443.3H597V438.0H598V432.7H599V427.1H600V419.1H601V414.2H602V402.0H603V401.3H604V383.7H605V393.6H606V381.0H607V390.6H608V382.3H609V390.0H610V390.8H611V397.4H612V411.7H613V424.7H614V436.3H615V440.3H616V444.0H617V445.4H618V446.8H619V448.2H620V449.6H621V452.2H622V454.7H623V452.9H624V447.4H625V441.1H626V424.1H627V429.1H628V402.2H629V417.3H630V393.1H631V409.7H632V398.4H633V406.9H634V408.6H635V413.6H636V419.2H637V429.2H638V438.2H639V441.1H640V443.9H641V446.7H642V451.9H643V459.0H644V466.2H645V467.5H646V464.9H647V451.3H648V459.2H649V454.2H650V445.9H651V425.2H652V416.9H653V417.6H654V406.9H655V414.6H656V408.5H657V412.5H658V416.1H659V417.4H660V418.7H661V420.7H662V425.7H663V430.7H664V435.7H665V440.2H666V442.2H667V444.3H668V446.3H669V448.3H670V450.4H671V452.9H672V455.0H673V455.5H674V454.5H675V450.4H676V447.1H677V436.7H678V418.7H679V425.0H680V406.5H681V416.4H682V392.0H683V407.9H684V400.2H685V410.1H686V417.3H687V423.8H688V429.9H689V431.9H690V434.0H691V438.0H692V442.2H693V449.7H694V457.6H695V466.0H696V469.6H697V463.3H698V455.8H699V449.2H700V435.6H701V437.4H702V408.1H703V426.6H704V394.9H705V417.9H706V398.4H707V411.8H708V410.1H709V413.1H710V416.0H711V417.7H712V419.3H713V421.5H714V424.0H715V426.0H716V427.9H717V427.9H718V428.1H719V431.9H720V435.6H721V438.8H722V438.3H723V437.4H724V431.4H725V429.6H726V417.3H727V423.5H728V407.7H729V418.2H730V408.1H731V414.5H732V412.1H733V414.0H734V415.0H735V416.7H736V425.3H737V434.0H738V442.4H739V448.4H740V454.4H741V464.4H742V463.5H743V476.5H744V469.8H745V491.6H746V468.4H747V466.0H748V447.7H749V428.8H750V419.3H751V413.7H752V410.5H753V409.6H754V409.0H755V409.5H756V411.1H757V425.7H758V460.2H759V467.0H760V477.2H761V485.8H762V481.4H763V446.9H764V424.9H765V417.5H766V414.5H767V411.8H768V410.8H769V409.9H770V409.5H771V409.2H772V408.9H773V408.9H774V408.9H775V409.1H776V410.6H777V412.7H778V420.2H779V435.3H780V441.3H781V424.7H782V416.7H783V409.6H784V407.6H785V405.8H786V405.1H787V404.5H788V404.0H789V404.7H790V405.3H791V406.0H792V406.7H793V407.3H794V408.4H795V411.4H796V415.9H797V431.4H798V473.1H799V491.5H800V499.8H801V499.8H802V499.8H803V497.9H804V486.9H805V477.0H806V472.0H807V483.6H808V435.9H809V480.2H810V450.7H811V483.4H812V453.5H813V488.7H814V489.8H815V489.8H816V489.8"/>
<path class="s" stroke="#00c8ff" d="M67,326.1H68V327.8H69V329.5H70V331.1H71V333.0H72V335.2H73V337.5H74V339.7H75V342.0H76V343.9H77V344.9H78V345.9H79V346.9H80V347.1H81V346.7H82V346.3H83V345.9H84V345.5H85V345.0H86V344.4H87V343.8H88V343.2H89V342.6H90V342.5H91V342.7H92V343.0H93V343.2H94V343.5H95V344.2H96V345.4H97V346.5H98V347.7H99V348.8H100V349.8H101V350.7H102V351.5H103V352.4H104V353.2H105V353.3H106V352.8H107V352.3H108V351.8H109V351.3H110V350.4H111V349.1H112V347.9H113V346.6H114V345.4H115V344.1H116V342.9H117V341.6H118V340.3H119V339.0H120V337.9H121V338.5H122V339.1H123V339.8H124V341.5H125V343.4H126V345.3H127V346.7H128V347.7H129V348.7H130V349.7H131V350.3H132V350.0H133V349.7H134V349.5H135V348.2H136V346.4H137V344.5H138V342.6H139V340.4H140V338.1H141V335.7H142V333.4H143V331.4H144V329.4H145V327.4H146V326.0H147V325.7H148V325.3H149V325.0H150V324.3H151V323.3H152V322.3H153V321.3H154V319.8H155V318.3H156V316.8H157V315.3H158V313.8H159V312.1H160V310.4H161V308.6H162V306.9H163V305.1H164V303.2H165V301.2H166V299.2H167V297.2H168V295.2H169V293.7H170V292.4H171V291.1H172V289.9H173V289.9H174V289.9H175V289.9H176V289.1H177V287.1H178V285.1H179V283.1H180V281.1H181V279.1H182V277.1H183V275.1H184V273.1H185V271.3H186V269.6H187V267.8H188V266.1H189V264.3H190V263.0H191V262.0H192V261.0H193V260.0H194V259.0H195V259.3H196V259.5H197V258.5H198V257.5H199V256.5H200V256.2H201V256.1H202V255.4H203V254.4H204V253.4H205V252.4H206V251.4H207V250.3H208V249.0H209V247.7H210V246.3H211V245.0H212V243.7H213V242.5H214V241.5H215V240.5H216V239.5H217V238.5H218V237.5H219V236.8H220V236.1H221V235.4H222V234.8H223V234.1H224V233.6H225V233.4H226V233.2H227V233.1H228V232.9H229V232.7H230V232.3H231V231.7H232V231.1H233V230.5H234V229.9H235V228.7H236V227.4H237V226.2H238V224.7H239V222.3H240V220.0H241V221.5H242V222.5H243V222.7H244V223.0H245V223.1H246V223.3H247V224.0H248V225.0H249V226.1H250V228.0H251V230.0H252V232.3H253V236.2H254V239.9H255V238.3H256V240.4H257V247.9H258V245.0H259V242.1H260V248.8H261V241.9H262V239.9H263V244.4H264V242.0H265V244.3H266V246.6H267V248.8H268V250.0H269V250.6H270V251.3H271V252.0H272V259.9H273V259.0H274V258.2H275V262.9H276V270.0H277V272.0H278V274.0H279V276.0H280V277.9H281V278.7H282V279.4H283V280.2H284V280.9H285V281.5H286V282.1H287V282.7H288V283.3H289V284.0H290V285.5H291V287.0H292V288.5H293V290.0H294V292.0H295V294.0H296V296.0H297V298.1H298V300.7H299V303.4H300V306.0H301V307.5H302V309.0H303V310.5H304V311.9H305V311.9H306V311.9H307V311.9H308V311.9H309V311.9H310V312.3H311V312.7H312V313.1H313V313.5H314V313.9H315V314.3H316V314.7H317V315.1H318V315.5H319V316.0H320V317.5H321V319.0H322V320.5H323V322.1H324V324.8H325V327.5H326V330.1H327V331.6H328V333.1H329V334.6H330V336.0H331V336.5H332V337.0H333V337.5H334V338.0H335V338.2H336V338.5H337V338.7H338V339.1H339V340.4H340V341.6H341V342.9H342V344.1H343V345.1H344V346.1H345V347.1H346V348.0H347V348.8H348V349.5H349V350.3H350V351.0H351V351.2H352V351.5H353V351.7H354V352.1H355V353.1H356V354.1H357V355.1H358V356.1H359V357.1H360V358.1H361V359.1H362V360.1H363V361.1H364V362.1H365V363.1H366V364.1H367V365.1H368V366.1H369V367.1H370V368.1H371V369.1H372V370.1H373V371.1H374V372.1H375V373.1H376V374.1H377V375.1H378V376.1H379V377.1H380V378.1H381V378.6H382V379.0H383V379.6H384V380.1H385V380.0H386V380.1H387V381.1H388V382.1H389V382.6H390V386.6H391V390.2H392V397.7H393V404.9H394V410.3H395V421.3H396V429.3H397V430.3H398V440.0H399V447.9H400V448.2H401V452.8H402V457.5H403V462.1H404V464.8H405V467.4H406V470.1H407V472.1H408V474.1H409V476.1H410V478.1H411V480.5H412V482.9H413V485.3H414V487.7H415V490.1H416V493.5H417V496.8H418V500.1H419V503.5H420V506.8H421V510.1H422V513.5H423V516.8H424V520.1H425V523.5H426V526.8H427V530.0H428V531.0H429V532.0H430V532.9H431V531.9H432V530.9H433V529.9H434V529.6H435V529.3H436V529.1H437V531.4H438V533.8H439V536.1H440V538.8H441V541.5H442V544.1H443V546.1H444V548.1H445V550.1H446V552.1H447V554.1H448V556.0H449V557.4H450V558.7H451V559.9H452V559.9H453V559.9H454V559.8H455V558.5H456V557.1H457V555.7H458V553.0H459V550.3H460V547.7H461V545.7H462V543.7H463V541.8H464V540.5H465V539.1H466V537.8H467V536.5H468V535.1H469V533.8H470V532.1H471V530.4H472V529.0H473V529.3H474V529.7H475V529.9H476V529.2H477V528.5H478V527.8H479V526.5H480V525.1H481V523.8H482V522.5H483V521.1H484V519.8H485V518.5H486V517.1H487V515.7H488V513.7H489V511.7H490V509.6H491V507.0H492V504.3H493V501.7H494V499.7H495V497.7H496V495.8H497V494.5H498V493.1H499V492.0H500V492.4H501V492.7H502V493.0H503V493.0H504V493.0H505V492.9H506V492.2H507V491.6H508V490.9H509V490.6H510V490.3H511V489.8H512V488.4H513V487.0H514V485.7H515V484.7H516V483.7H517V482.7H518V481.7H519V481.0H520V480.2H521V479.5H522V478.9H523V479.2H524V479.6H525V480.0H526V481.0H527V482.0H528V483.0H529V483.9H530V484.2H531V484.6H532V484.9H533V485.7H534V484.7H535V483.8H536V482.9H537V481.7H538V480.7H539V479.8H540V478.9H541V478.2H542V477.4H543V476.7H544V475.9H545V475.7H546V475.4H547V475.2H548V474.9H549V474.7H550V474.4H551V474.2H552V473.9H553V473.4H554V472.9H555V472.4H556V471.9H557V471.2H558V470.4H559V469.7H560V468.9H561V468.7H562V468.4H563V468.2H564V468.0H565V468.2H566V468.5H567V468.7H568V469.0H569V469.7H570V470.5H571V471.2H572V472.0H573V472.7H574V473.5H575V474.2H576V475.0H577V475.2H578V475.5H579V475.7H580V475.9H581V475.1H582V474.4H583V473.6H584V472.8H585V471.6H586V470.3H587V469.1H588V467.8H589V466.6H590V465.3H591V464.1H592V462.9H593V462.1H594V461.4H595V460.6H596V459.9H597V459.7H598V459.4H599V459.2H600V458.9H601V458.4H602V457.9H603V457.4H604V456.9H605V456.4H606V455.9H607V455.4H608V454.9H609V454.4H610V453.9H611V453.4H612V452.9H613V452.4H614V451.9H615V451.4H616V451.1H617V452.1H618V453.1H619V454.1H620V455.0H621V455.8H622V456.5H623V457.3H624V458.0H625V458.5H626V459.0H627V459.5H628V460.0H629V460.2H630V460.5H631V460.7H632V461.0H633V461.2H634V461.5H635V461.7H636V462.1H637V462.8H638V463.6H639V464.3H640V465.1H641V465.8H642V466.6H643V467.3H644V467.9H645V467.7H646V467.4H647V467.2H648V466.8H649V466.1H650V465.3H651V464.6H652V463.7H653V462.5H654V461.2H655V460.0H656V458.7H657V457.5H658V456.2H659V455.0H660V453.8H661V452.8H662V451.8H663V450.8H664V449.9H665V449.6H666V449.2H667V449.0H668V449.4H669V449.7H670V450.2H671V451.5H672V452.9H673V454.1H674V455.1H675V456.1H676V457.0H677V457.3H678V457.5H679V457.8H680V457.8H681V456.8H682V455.8H683V454.8H684V453.8H685V452.8H686V451.8H687V450.8H688V450.2H689V449.5H690V448.9H691V449.2H692V449.5H693V449.9H694V451.2H695V452.6H696V453.9H697V455.2H698V456.6H699V457.9H700V458.9H701V459.9H702V460.9H703V461.2H704V461.5H705V461.8H706V461.1H707V460.5H708V459.8H709V458.4H710V457.1H711V455.7H712V454.1H713V452.4H714V450.8H715V449.4H716V448.1H717V446.8H718V446.1H719V445.5H720V444.9H721V444.9H722V444.9H723V444.9H724V445.2H725V445.6H726V445.9H727V445.9H728V445.9H729V445.8H730V444.8H731V443.8H732V442.8H733V441.8H734V440.8H735V439.8H736V439.5H737V439.2H738V438.9H739V439.6H740V440.3H741V441.0H742V442.7H743V444.4H744V446.0H745V447.7H746V449.4H747V451.0H748V452.7H749V454.4H750V456.0H751V457.0H752V458.0H753V458.9H754V459.2H755V459.5H756V459.9H757V460.6H758V461.3H759V462.0H760V463.3H761V464.7H762V466.0H763V467.3H764V468.7H765V470.0H766V471.0H767V472.0H768V472.9H769V473.6H770V474.2H771V474.9H772V475.6H773V476.2H774V476.9H775V477.2H776V477.5H777V477.8H778V477.8H779V477.8H780V477.8H781V477.4H782V477.1H783V476.8H784V476.4H785V476.1H786V475.9H787V476.6H788V477.3H789V477.9H790V478.6H791V479.3H792V479.9H793V480.6H794V481.3H795V482.0H796V483.0H797V484.0H798V485.3H799V488.4H800V491.4H801V493.6H802V491.6H803V489.7H804V488.4H805V487.1H806V485.8H807V484.8H808V483.8H809V483.0H810V483.4H811V483.7H812V484.1H813V485.1H814V486.1H815V487.1H816V488.1"/>
<path class="s" stroke="#ffcc00" d="M67,316.2H68V319.8H69V323.5H70V327.2H71V330.6H72V333.2H73V335.9H74V338.6H75V339.5H76V338.9H77V338.2H78V337.5H79V335.8H80V333.8H81V331.8H82V329.8H83V328.5H84V327.2H85V325.8H86V325.3H87V326.6H88V327.9H89V329.3H90V331.3H91V334.0H92V336.6H93V339.3H94V341.3H95V343.2H96V345.1H97V346.8H98V346.6H99V346.4H100V346.2H101V345.7H102V344.4H103V343.0H104V341.7H105V340.2H106V338.5H107V336.9H108V335.2H109V333.5H110V331.9H111V330.2H112V328.6H113V327.6H114V326.6H115V325.6H116V325.0H117V325.3H118V325.7H119V326.0H120V326.4H121V326.9H122V327.3H123V327.8H124V327.8H125V327.6H126V327.5H127V327.2H128V324.5H129V321.8H130V319.2H131V316.5H132V313.8H133V311.2H134V308.5H135V305.8H136V303.2H137V300.5H138V297.8H139V295.4H140V293.1H141V290.8H142V288.6H143V287.9H144V287.3H145V286.6H146V286.4H147V287.1H148V287.7H149V288.4H150V287.9H151V286.5H152V285.2H153V283.9H154V281.7H155V279.3H156V277.0H157V274.7H158V273.1H159V271.4H160V269.7H161V268.3H162V267.3H163V266.3H164V265.3H165V263.9H166V262.2H167V260.6H168V258.9H169V257.0H170V255.5H171V254.6H172V253.6H173V252.5H174V252.4H175V252.4H176V249.1H177V241.3H178V233.6H179V221.1H180V214.1H181V208.6H182V206.6H183V204.6H184V203.3H185V202.6H186V202.0H187V203.1H188V205.1H189V207.1H190V209.1H191V211.1H192V213.1H193V214.6H194V216.1H195V217.6H196V218.9H197V219.6H198V220.4H199V221.1H200V221.0H201V220.2H202V219.5H203V218.7H204V216.5H205V214.0H206V211.5H207V209.1H208V207.1H209V205.1H210V203.1H211V201.4H212V200.4H213V199.4H214V199.9H215V201.5H216V203.2H217V205.1H218V207.1H219V209.1H220V211.1H221V212.1H222V213.1H223V214.1H224V214.9H225V215.2H226V215.4H227V215.7H228V215.0H229V213.3H230V211.6H231V209.3H232V206.6H233V204.0H234V203.0H235V202.4H236V201.9H237V203.2H238V204.5H239V206.8H240V212.0H241V213.1H242V214.3H243V216.6H244V220.0H245V220.2H246V220.4H247V222.0H248V224.0H249V223.7H250V223.5H251V223.3H252V224.0H253V223.4H254V222.8H255V221.7H256V220.0H257V219.4H258V218.8H259V216.0H260V218.0H261V220.1H262V223.3H263V231.1H264V230.2H265V237.9H266V244.7H267V244.1H268V250.1H269V256.0H270V258.1H271V262.1H272V266.1H273V270.0H274V272.0H275V274.0H276V275.9H277V276.6H278V277.3H279V277.8H280V276.5H281V275.2H282V273.8H283V272.6H284V273.3H285V276.3H286V280.5H287V286.4H288V292.1H289V296.8H290V301.5H291V306.0H292V308.7H293V311.4H294V313.9H295V314.9H296V315.9H297V316.9H298V317.8H299V317.8H300V317.8H301V317.7H302V316.2H303V314.7H304V311.5H305V306.5H306V301.5H307V297.5H308V294.2H309V298.2H310V302.5H311V310.5H312V318.3H313V323.6H314V329.0H315V333.7H316V331.7H317V330.4H318V335.1H319V339.7H320V344.3H321V348.5H322V352.7H323V353.4H324V352.6H325V351.7H326V349.7H327V347.7H328V345.7H329V343.7H330V341.7H331V339.8H332V338.5H333V337.1H334V336.1H335V337.4H336V338.8H337V340.3H338V342.9H339V345.6H340V348.3H341V351.7H342V355.0H343V358.3H344V360.9H345V363.6H346V365.9H347V365.9H348V365.9H349V365.7H350V363.7H351V361.7H352V359.7H353V357.7H354V355.7H355V353.7H356V351.7H357V349.7H358V347.8H359V346.8H360V346.4H361V349.4H362V352.6H363V357.3H364V362.0H365V366.4H366V369.8H367V373.1H368V376.2H369V378.2H370V380.2H371V381.9H372V381.9H373V381.9H374V381.6H375V379.6H376V377.6H377V375.6H378V373.6H379V371.6H380V369.6H381V367.6H382V365.6H383V363.7H384V362.1H385V360.6H386V361.7H387V364.7H388V373.3H389V387.5H390V407.5H391V425.5H392V469.9H393V462.8H394V486.1H395V490.7H396V495.4H397V500.0H398V502.5H399V504.9H400V503.4H401V501.9H402V497.9H403V493.9H404V490.9H405V488.0H406V486.6H407V485.3H408V484.1H409V487.1H410V490.3H411V498.3H412V506.2H413V512.9H414V519.6H415V526.3H416V534.3H417V542.3H418V550.2H419V556.9H420V563.6H421V570.2H422V577.2H423V583.7H424V580.7H425V577.6H426V571.6H427V565.5H428V558.5H429V551.6H430V545.6H431V539.8H432V536.9H433V539.3H434V544.4H435V551.4H436V558.3H437V564.3H438V570.1H439V573.1H440V576.0H441V577.3H442V578.7H443V580.1H444V582.8H445V585.4H446V588.0H447V589.3H448V590.7H449V591.6H450V588.6H451V585.4H452V579.4H453V573.3H454V566.6H455V560.0H456V553.4H457V547.4H458V541.4H459V535.5H460V530.8H461V526.2H462V521.8H463V519.8H464V517.8H465V516.1H466V517.4H467V518.8H468V520.0H469V520.3H470V520.7H471V520.9H472V520.6H473V520.3H474V519.7H475V517.7H476V515.7H477V513.6H478V510.3H479V506.9H480V503.5H481V499.5H482V495.6H483V492.6H484V489.5H485V485.5H486V481.4H487V477.4H488V473.5H489V470.8H490V468.2H491V465.8H492V465.1H493V464.4H494V463.8H495V463.6H496V463.3H497V463.1H498V462.8H499V462.1H500V461.4H501V460.5H502V458.2H503V455.9H504V453.5H505V450.8H506V448.1H507V445.5H508V442.8H509V440.1H510V438.1H511V439.1H512V440.5H513V444.5H514V448.3H515V451.0H516V453.6H517V456.1H518V457.8H519V459.5H520V460.8H521V460.5H522V460.1H523V459.5H524V457.5H525V455.5H526V453.5H527V451.5H528V449.5H529V447.4H530V444.7H531V442.1H532V439.4H533V436.7H534V434.0H535V433.6H536V432.3H537V431.0H538V431.8H539V431.4H540V431.0H541V431.3H542V431.7H543V432.0H544V433.4H545V434.7H546V436.0H547V437.4H548V438.7H549V440.1H550V442.7H551V445.4H552V448.1H553V450.7H554V453.4H555V456.0H556V457.3H557V458.7H558V460.0H559V460.3H560V460.6H561V461.0H562V461.7H563V462.3H564V463.0H565V463.7H566V464.3H567V465.0H568V465.3H569V465.6H570V465.9H571V465.2H572V464.6H573V463.8H574V461.8H575V459.8H576V457.8H577V455.1H578V452.4H579V449.8H580V447.1H581V444.4H582V441.8H583V439.8H584V437.8H585V435.9H586V435.3H587V434.6H588V434.0H589V434.7H590V435.4H591V436.0H592V436.3H593V436.7H594V436.9H595V435.9H596V434.9H597V433.8H598V432.2H599V430.5H600V428.8H601V426.5H602V424.2H603V421.9H604V419.7H605V417.7H606V415.7H607V413.8H608V412.8H609V412.0H610V413.0H611V414.2H612V417.2H613V420.5H614V426.2H615V428.2H616V430.2H617V432.3H618V435.0H619V437.6H620V440.2H621V442.2H622V444.2H623V446.1H624V447.1H625V447.7H626V445.7H627V443.7H628V441.6H629V439.0H630V436.3H631V433.7H632V431.7H633V429.7H634V427.9H635V426.9H636V426.4H637V429.4H638V432.6H639V436.6H640V440.5H641V443.8H642V447.1H643V450.3H644V452.3H645V454.3H646V456.0H647V456.0H648V456.0H649V455.6H650V453.6H651V451.6H652V449.5H653V446.9H654V444.2H655V441.7H656V439.7H657V437.7H658V435.8H659V434.4H660V433.1H661V431.9H662V431.6H663V431.3H664V431.2H665V432.2H666V433.2H667V434.3H668V436.3H669V438.3H670V440.3H671V442.3H672V444.3H673V446.1H674V446.8H675V447.4H676V447.7H677V446.4H678V445.1H679V443.5H680V441.0H681V438.4H682V435.9H683V433.3H684V430.9H685V431.2H686V431.6H687V431.9H688V433.9H689V435.9H690V438.0H691V440.6H692V443.3H693V445.9H694V447.9H695V449.9H696V451.9H697V451.9H698V451.9H699V451.8H700V450.5H701V449.1H702V447.8H703V445.8H704V443.8H705V441.8H706V439.8H707V437.8H708V435.8H709V433.8H710V431.8H711V429.8H712V429.2H713V428.5H714V427.9H715V428.6H716V429.3H717V430.0H718V431.3H719V432.6H720V433.9H721V434.2H722V434.6H723V434.8H724V433.8H725V432.8H726V431.8H727V430.4H728V429.1H729V427.8H730V426.8H731V425.8H732V424.9H733V424.4H734V424.0H735V424.9H736V426.5H737V428.2H738V431.2H739V434.3H740V438.3H741V442.3H742V446.3H743V450.3H744V454.3H745V466.0H746V466.7H747V467.4H748V468.0H749V468.0H750V468.0H751V468.0H752V468.0H753V468.0H754V468.0H755V468.0H756V468.0H757V468.4H758V468.7H759V469.1H760V470.1H761V471.1H762V472.1H763V473.5H764V474.8H765V476.1H766V477.5H767V478.8H768V480.1H769V481.5H770V482.8H771V484.1H772V485.1H773V486.1H774V487.0H775V487.3H776V487.7H777V487.8H778V486.8H779V485.8H780V484.8H781V483.8H782V482.8H783V482.0H784V482.0H785V482.0H786V482.2H787V483.5H788V484.8H789V486.2H790V487.5H791V488.8H792V490.2H793V491.9H794V493.5H795V495.3H796V497.7H797V500.0H798V502.3H799V504.3H800V505.6H801V503.6H802V501.6H803V499.6H804V497.8H805V496.8H806V495.8H807V494.8H808V494.2H809V493.5H810V493.1H811V493.7H812V494.4H813V495.2H814V496.5H815V497.9H816V498.9"/>
<path class="s" stroke="#555555" d="M67,352.4H68V357.4H69V362.4H70V366.4H71V369.4H72V372.4H73V375.4H74V373.8H75V370.8H76V367.8H77V364.8H78V361.4H79V358.1H80V354.8H81V351.4H82V347.9H83V344.5H84V341.2H85V343.7H86V346.2H87V350.0H88V355.0H89V360.0H90V364.5H91V368.5H92V372.5H93V376.5H94V379.1H95V381.4H96V383.8H97V383.9H98V382.2H99V380.6H100V377.8H101V374.1H102V370.5H103V366.8H104V363.7H105V360.7H106V357.7H107V354.8H108V353.3H109V351.8H110V350.3H111V348.8H112V347.3H113V346.6H114V346.0H115V345.3H116V345.3H117V346.9H118V348.4H119V350.0H120V351.6H121V353.3H122V354.8H123V354.8H124V354.8H125V354.8H126V353.9H127V350.9H128V347.9H129V343.5H130V338.8H131V334.1H132V329.6H133V325.9H134V322.2H135V318.6H136V315.2H137V312.6H138V309.9H139V307.2H140V305.7H141V304.8H142V304.0H143V304.4H144V305.5H145V306.7H146V308.0H147V309.8H148V311.6H149V313.1H150V312.8H151V312.5H152V310.4H153V307.0H154V303.7H155V300.4H156V297.0H157V293.7H158V290.4H159V288.2H160V286.2H161V284.2H162V282.3H163V281.3H164V280.3H165V279.3H166V277.9H167V275.9H168V273.9H169V271.9H170V270.9H171V270.4H172V270.4H173V273.4H174V276.4H175V275.8H176V273.3H177V261.2H178V232.4H179V233.8H180V214.3H181V211.8H182V210.2H183V210.2H184V210.2H185V211.6H186V214.1H187V217.6H188V221.6H189V225.6H190V228.8H191V231.9H192V232.0H193V228.5H194V229.2H195V233.0H196V236.6H197V239.9H198V243.2H199V245.6H200V247.2H201V248.4H202V245.9H203V243.4H204V239.6H205V235.6H206V231.6H207V227.6H208V223.6H209V220.1H210V218.5H211V216.8H212V215.1H213V217.0H214V219.5H215V222.5H216V225.8H217V229.2H218V232.5H219V235.8H220V239.2H221V241.2H222V243.2H223V244.9H224V245.2H225V245.6H226V244.9H227V242.6H228V240.2H229V236.6H230V231.9H231V227.3H232V224.4H233V222.0H234V219.7H235V220.0H236V220.8H237V224.8H238V229.2H239V235.6H240V241.9H241V240.9H242V245.4H243V249.9H244V247.9H245V249.9H246V251.9H247V253.9H248V254.0H249V254.1H250V254.2H251V253.9H252V253.0H253V251.7H254V248.8H255V245.9H256V243.5H257V240.1H258V236.8H259V231.9H260V231.8H261V241.9H262V246.7H263V259.9H264V266.2H265V273.1H266V280.1H267V285.6H268V291.1H269V296.6H270V302.0H271V306.0H272V310.0H273V313.9H274V315.1H275V316.2H276V315.9H277V313.9H278V311.8H279V309.7H280V306.4H281V303.0H282V299.7H283V297.2H284V294.7H285V295.5H286V298.4H287V308.4H288V317.8H289V326.0H290V334.2H291V338.3H292V342.4H293V348.1H294V350.8H295V353.4H296V355.9H297V355.2H298V354.6H299V353.7H300V351.1H301V348.4H302V345.7H303V342.4H304V339.0H305V335.8H306V333.4H307V331.1H308V328.9H309V328.5H310V328.1H311V331.4H312V336.4H313V342.7H314V349.6H315V356.5H316V363.2H317V369.9H318V376.3H319V381.0H320V385.7H321V390.0H322V391.5H323V392.5H324V389.0H325V385.6H326V382.2H327V378.9H328V375.6H329V373.0H330V370.3H331V367.8H332V366.4H333V365.1H334V364.0H335V364.4H336V364.8H337V368.9H338V374.4H339V379.8H340V385.2H341V390.3H342V393.6H343V397.0H344V399.9H345V400.3H346V400.6H347V400.6H348V398.2H349V395.9H350V393.4H351V390.1H352V386.8H353V383.4H354V380.1H355V376.8H356V373.5H357V370.9H358V368.2H359V365.8H360V364.8H361V365.6H362V377.0H363V385.1H364V392.0H365V398.6H366V403.2H367V407.9H368V412.3H369V414.9H370V417.6H371V420.0H372V420.7H373V421.5H374V420.0H375V416.7H376V413.2H377V409.2H378V405.2H379V401.3H380V398.0H381V394.7H382V391.5H383V389.5H384V387.4H385V387.2H386V387.6H387V389.4H388V398.0H389V419.3H390V451.6H391V473.1H392V490.3H393V510.1H394V520.1H395V530.1H396V538.1H397V546.1H398V554.1H399V561.7H400V553.7H401V545.7H402V537.7H403V529.8H404V524.8H405V519.9H406V516.4H407V513.0H408V513.5H409V514.5H410V530.4H411V542.4H412V554.3H413V564.3H414V574.1H415V579.4H416V584.8H417V590.1H418V595.4H419V600.8H420V606.1H421V610.1H422V614.1H423V618.1H424V623.1H425V627.1H426V614.1H427V601.3H428V591.3H429V581.4H430V573.7H431V566.1H432V559.1H433V553.1H434V551.9H435V557.1H436V574.2H437V589.1H438V602.6H439V613.9H440V620.2H441V621.1H442V622.1H443V626.1H444V630.4H445V637.4H446V643.3H447V636.3H448V629.0H449V619.0H450V609.0H451V599.0H452V589.2H453V580.8H454V572.5H455V565.7H456V559.5H457V553.5H458V548.8H459V544.2H460V539.7H461V536.7H462V534.2H463V537.2H464V540.0H465V541.0H466V542.0H467V543.0H468V543.3H469V543.6H470V544.2H471V546.2H472V548.2H473V549.7H474V547.7H475V545.2H476V539.2H477V533.2H478V527.2H479V521.2H480V515.2H481V509.2H482V503.2H483V497.0H484V489.6H485V486.2H486V482.8H487V479.7H488V478.7H489V478.4H490V482.4H491V486.4H492V490.4H493V493.9H494V494.6H495V495.3H496V495.5H497V493.5H498V491.5H499V489.5H500V487.4H501V484.0H502V480.7H503V477.3H504V473.3H505V469.3H506V465.5H507V462.8H508V460.1H509V457.7H510V456.7H511V456.5H512V460.5H513V464.8H514V470.8H515V476.5H516V480.5H517V484.5H518V488.3H519V490.9H520V493.6H521V495.9H522V496.4H523V496.3H524V493.3H525V490.3H526V487.1H527V483.1H528V479.1H529V475.1H530V471.1H531V467.1H532V462.6H533V458.1H534V455.1H535V455.9H536V455.9H537V456.0H538V457.1H539V458.0H540V459.0H541V460.0H542V461.0H543V462.1H544V466.1H545V470.1H546V473.9H547V471.9H548V469.9H549V468.1H550V472.1H551V476.1H552V481.1H553V485.9H554V484.9H555V483.8H556V479.8H557V475.8H558V472.8H559V470.0H560V472.0H561V474.2H562V480.2H563V486.2H564V490.7H565V495.0H566V496.0H567V497.0H568V498.0H569V499.0H570V500.0H571V500.9H572V501.4H573V501.8H574V499.8H575V497.7H576V494.4H577V491.0H578V487.6H579V483.6H580V479.6H581V475.6H582V471.6H583V467.6H584V463.7H585V460.7H586V457.7H587V454.8H588V453.2H589V451.5H590V450.1H591V451.4H592V452.7H593V454.2H594V456.9H595V459.5H596V462.1H597V464.1H598V466.1H599V467.7H600V465.0H601V462.4H602V459.5H603V454.8H604V450.2H605V445.6H606V442.3H607V439.0H608V435.9H609V435.1H610V434.2H611V436.1H612V439.1H613V443.5H614V448.5H615V453.3H616V457.9H617V462.3H618V465.7H619V469.0H620V472.3H621V475.7H622V479.0H623V482.1H624V483.5H625V482.2H626V479.9H627V477.5H628V474.2H629V470.8H630V467.5H631V464.2H632V460.8H633V457.7H634V455.7H635V453.7H636V452.5H637V456.7H638V460.9H639V465.9H640V471.3H641V476.6H642V481.3H643V485.9H644V490.3H645V493.3H646V496.2H647V496.9H648V496.9H649V496.5H650V494.2H651V491.9H652V489.3H653V485.3H654V481.3H655V477.3H656V473.3H657V469.3H658V465.4H659V462.4H660V459.4H661V456.9H662V456.4H663V456.5H664V459.5H665V462.5H666V465.9H667V469.2H668V472.5H669V475.9H670V479.2H671V482.2H672V483.7H673V485.3H674V485.4H675V484.6H676V483.5H677V481.5H678V479.5H679V477.0H680V472.4H681V467.7H682V463.0H683V458.4H684V453.9H685V454.3H686V454.7H687V457.0H688V460.5H689V464.0H690V467.3H691V470.6H692V474.0H693V477.3H694V480.6H695V483.9H696V486.9H697V489.9H698V492.9H699V492.4H700V491.8H701V488.5H702V485.1H703V481.8H704V477.8H705V473.8H706V469.8H707V466.5H708V463.1H709V459.9H710V458.2H711V456.6H712V455.0H713V455.4H714V455.9H715V457.5H716V459.8H717V462.2H718V464.8H719V467.5H720V470.1H721V471.3H722V472.6H723V472.5H724V471.7H725V470.8H726V468.8H727V466.8H728V464.8H729V462.5H730V460.1H731V457.9H732V456.5H733V455.2H734V454.0H735V454.4H736V454.9H737V458.8H738V464.3H739V469.5H740V474.5H741V479.5H742V484.5H743V491.5H744V499.5H745V508.1H746V515.8H747V514.8H748V513.7H749V512.1H750V510.4H751V508.9H752V508.2H753V507.5H754V506.9H755V506.6H756V506.2H757V506.0H758V506.7H759V507.3H760V508.2H761V510.7H762V513.2H763V515.3H764V517.2H765V519.0H766V520.0H767V521.0H768V522.0H769V523.0H770V524.0H771V525.0H772V525.7H773V526.3H774V526.9H775V526.5H776V526.2H777V525.8H778V524.8H779V523.8H780V522.7H781V521.0H782V519.3H783V517.8H784V517.2H785V516.5H786V516.0H787V516.7H788V517.4H789V518.2H790V519.8H791V521.5H792V523.1H793V524.5H794V525.8H795V527.3H796V529.8H797V533.3H798V541.9H799V547.7H800V551.5H801V549.5H802V547.2H803V543.2H804V539.2H805V535.2H806V531.5H807V529.2H808V526.8H809V524.7H810V523.7H811V522.7H812V522.1H813V523.1H814V524.5H815V527.5H816V529.9"/>
<path class="s" stroke="#aaff22" d="M67,404.7H68V396.7H69V384.2H70V382.4H71V390.8H72V394.5H73V374.5H74V314.8H75V280.5H76V281.5H77V282.2H78V271.2H79V260.2H80V253.1H81V249.6H82V246.5H83V255.8H84V265.8H85V295.9H86V330.9H87V364.4H88V350.4H89V364.1H90V384.9H91V388.8H92V392.6H93V396.5H94V393.3H95V388.3H96V380.7H97V366.7H98V352.7H99V333.9H100V305.2H101V271.6H102V244.7H103V239.2H104V233.7H105V234.3H106V239.8H107V246.0H108V264.0H109V291.7H110V308.3H111V319.2H112V339.1H113V327.1H114V334.6H115V330.8H116V325.0H117V340.2H118V345.2H119V350.2H120V351.8H121V350.8H122V348.7H123V332.7H124V290.0H125V250.0H126V235.0H127V215.0H128V190.0H129V183.3H130V179.8H131V179.2H132V182.0H133V187.5H134V210.0H135V225.0H136V242.9H137V249.8H138V249.2H139V250.9H140V254.7H141V258.5H142V261.8H143V264.9H144V268.0H145V262.0H146V256.0H147V250.0H148V230.0H149V208.0H150V190.0H151V183.3H152V174.5H153V149.9H154V123.3H155V112.7H156V108.1H157V107.1H158V113.2H159V130.1H160V164.8H161V186.2H162V220.0H163V226.7H164V231.0H165V233.0H166V235.0H167V234.0H168V233.0H169V232.0H170V237.6H171V243.2H172V248.9H173V210.0H174V173.6H175V115.1H176V84.7H177V70.2H178V60.3H179V56.1H180V55.6H181V49.8H182V33.4H183V33.0H184V46.4H185V72.1H186V121.2H187V158.8H188V179.1H189V185.3H190V191.4H191V196.4H192V201.1H193V205.7H194V209.8H195V213.8H196V217.5H197V220.0H198V199.2H199V163.9H200V123.9H201V92.7H202V72.3H203V57.3H204V44.7H205V36.7H206V34.8H207V38.8H208V53.1H209V76.4H210V115.6H211V143.2H212V159.4H213V176.6H214V185.0H215V192.6H216V199.2H217V204.5H218V209.8H219V212.9H220V214.9H221V216.9H222V203.0H223V186.8H224V164.6H225V130.8H226V98.9H227V72.2H228V56.8H229V55.3H230V64.0H231V82.5H232V103.9H233V125.8H234V141.9H235V159.6H236V181.2H237V193.7H238V206.1H239V212.7H240V219.4H241V226.0H242V232.5H243V235.6H244V231.9H245V228.2H246V223.3H247V217.3H248V202.1H249V182.1H250V155.3H251V135.6H252V125.6H253V115.6H254V112.3H255V112.3H256V112.3H257V112.3H258V112.3H259V153.1H260V209.7H261V250.7H262V294.1H263V298.0H264V304.0H265V309.9H266V310.9H267V312.6H268V333.9H269V335.9H270V338.0H271V343.9H272V344.9H273V343.4H274V287.8H275V253.9H276V234.2H277V231.0H278V237.9H279V241.6H280V235.4H281V233.7H282V228.2H283V211.9H284V211.2H285V221.3H286V244.7H287V292.1H288V331.0H289V350.3H290V358.6H291V369.8H292V367.8H293V366.9H294V381.8H295V380.6H296V371.7H297V357.0H298V343.2H299V327.6H300V342.6H301V268.9H302V255.0H303V243.0H304V245.3H305V263.8H306V286.5H307V294.0H308V299.2H309V303.2H310V318.3H311V323.3H312V335.0H313V353.4H314V370.6H315V377.6H316V382.1H317V404.2H318V408.2H319V412.3H320V416.6H321V413.4H322V407.6H323V397.5H324V372.3H325V336.6H326V316.2H327V301.0H328V292.4H329V280.1H330V284.0H331V303.8H332V322.0H333V339.4H334V337.6H335V352.6H336V367.3H337V381.2H338V392.7H339V399.5H340V403.6H341V401.6H342V400.0H343V401.0H344V401.6H345V399.6H346V396.5H347V385.2H348V368.6H349V346.0H350V320.0H351V317.2H352V297.2H353V278.0H354V263.7H355V254.4H356V251.3H357V253.6H358V266.7H359V284.7H360V292.2H361V308.3H362V325.5H363V349.8H364V410.1H365V408.9H366V398.3H367V397.7H368V408.3H369V410.8H370V417.4H371V428.0H372V427.7H373V415.1H374V386.7H375V366.7H376V349.7H377V348.5H378V328.2H379V311.8H380V281.7H381V282.4H382V293.3H383V313.3H384V351.5H385V431.4H386V495.8H387V510.2H388V540.0H389V550.1H390V564.4H391V606.0H392V615.1H393V612.9H394V626.4H395V641.4H396V647.2H397V647.2H398V632.2H399V615.8H400V601.5H401V586.6H402V571.6H403V556.6H404V542.1H405V547.1H406V556.1H407V570.6H408V590.0H409V592.5H410V611.2H411V632.5H412V651.0H413V680.9H414V695.2H415V696.2H416V691.0H417V668.2H418V677.3H419V690.8H420V701.4H421V726.8H422V727.0H423V692.5H424V630.3H425V615.4H426V576.9H427V548.2H428V518.2H429V488.7H430V472.0H431V472.0H432V498.1H433V532.5H434V570.6H435V580.6H436V600.5H437V610.8H438V625.1H439V645.6H440V651.8H441V658.8H442V653.8H443V650.1H444V655.7H445V672.8H446V687.1H447V685.0H448V625.7H449V600.7H450V607.0H451V487.0H452V451.1H453V431.3H454V418.7H455V404.9H456V394.4H457V388.5H458V394.2H459V408.7H460V428.8H461V454.8H462V482.3H463V501.5H464V516.2H465V529.6H466V542.3H467V546.3H468V550.5H469V555.5H470V559.0H471V550.7H472V534.8H473V518.1H474V509.9H475V498.4H476V390.0H477V350.0H478V326.0H479V316.0H480V315.8H481V315.5H482V320.5H483V331.5H484V372.2H485V384.3H486V438.9H487V454.9H488V462.9H489V470.4H490V474.4H491V478.1H492V480.1H493V482.4H494V486.4H495V491.0H496V499.6H497V492.0H498V478.6H499V458.4H500V425.6H501V395.6H502V390.0H503V373.0H504V360.0H505V337.9H506V325.0H507V325.0H508V342.6H509V380.0H510V398.0H511V423.7H512V451.5H513V475.8H514V490.2H515V492.2H516V494.2H517V496.2H518V498.8H519V504.8H520V500.8H521V505.8H522V512.0H523V518.5H524V505.4H525V484.0H526V446.9H527V390.0H528V352.0H529V334.0H530V331.2H531V329.0H532V329.0H533V345.0H534V382.0H535V393.9H536V439.8H537V462.4H538V466.0H539V468.0H540V470.0H541V472.0H542V474.9H543V488.5H544V519.2H545V560.0H546V592.4H547V598.0H548V600.3H549V600.3H550V582.0H551V549.0H552V500.0H553V460.0H554V418.7H555V400.7H556V396.1H557V400.8H558V420.8H559V440.8H560V461.2H561V486.4H562V496.4H563V504.0H564V510.0H565V511.2H566V512.5H567V510.8H568V508.5H569V518.7H570V516.2H571V514.0H572V515.4H573V507.0H574V488.3H575V454.9H576V417.2H577V377.9H578V348.1H579V323.3H580V313.3H581V308.9H582V313.7H583V329.5H584V357.8H585V381.2H586V397.4H587V413.3H588V431.0H589V446.1H590V474.5H591V475.9H592V463.9H593V461.0H594V462.5H595V464.7H596V473.3H597V473.6H598V464.5H599V436.7H600V375.1H601V340.0H602V324.6H603V315.1H604V317.4H605V332.0H606V351.0H607V362.0H608V382.0H609V402.0H610V422.0H611V440.9H612V451.0H613V462.2H614V480.2H615V482.7H616V481.7H617V478.1H618V479.5H619V488.9H620V501.0H621V508.9H622V508.9H623V497.5H624V470.3H625V448.8H626V433.3H627V415.5H628V383.8H629V369.3H630V364.3H631V362.5H632V362.7H633V370.9H634V392.9H635V415.2H636V437.1H637V446.5H638V455.9H639V466.2H640V481.9H641V496.2H642V508.7H643V514.3H644V516.1H645V514.6H646V511.5H647V505.9H648V493.1H649V471.1H650V437.7H651V392.0H652V378.6H653V372.2H654V378.2H655V397.8H656V405.5H657V409.8H658V423.8H659V444.9H660V451.1H661V457.3H662V464.8H663V472.9H664V478.6H665V486.7H666V494.1H667V495.4H668V493.4H669V491.2H670V498.3H671V504.8H672V509.7H673V508.4H674V487.5H675V460.3H676V445.8H677V431.5H678V412.3H679V377.2H680V367.3H681V374.7H682V382.1H683V390.1H684V396.6H685V420.8H686V450.5H687V470.1H688V477.9H689V480.3H690V482.8H691V485.2H692V487.6H693V490.3H694V498.9H695V505.1H696V509.7H697V504.7H698V489.0H699V469.0H700V447.9H701V407.9H702V369.4H703V359.9H704V359.2H705V367.1H706V374.6H707V376.7H708V391.1H709V411.1H710V430.6H711V443.1H712V453.6H713V461.6H714V467.4H715V470.7H716V474.0H717V477.3H718V480.5H719V483.7H720V486.9H721V471.9H722V489.4H723V428.7H724V405.1H725V396.1H726V398.6H727V406.2H728V410.6H729V419.2H730V434.9H731V446.9H732V458.4H733V464.4H734V470.2H735V474.2H736V478.3H737V483.3H738V488.4H739V498.6H740V510.3H741V514.3H742V518.7H743V526.2H744V537.0H745V551.0H746V562.5H747V571.1H748V578.4H749V581.0H750V579.8H751V574.8H752V576.4H753V584.7H754V582.7H755V582.2H756V578.2H757V571.7H758V563.5H759V567.6H760V582.4H761V592.2H762V613.7H763V616.1H764V604.5H765V596.0H766V590.9H767V598.0H768V607.9H769V604.3H770V602.5H771V603.0H772V604.3H773V605.8H774V605.0H775V592.4H776V584.4H777V578.6H778V575.8H779V571.5H780V565.1H781V558.6H782V554.8H783V555.2H784V563.7H785V570.5H786V583.7H787V598.4H788V605.8H789V610.6H790V612.0H791V614.1H792V620.8H793V628.3H794V625.2H795V621.7H796V618.5H797V615.6H798V613.2H799V605.1H800V583.1H801V554.9H802V519.9H803V490.7H804V477.1H805V472.5H806V470.7H807V472.1H808V477.2H809V486.6H810V511.6H811V541.0H812V553.2H813V563.4H814V562.3H815V557.7H816V555.9"/>
<path class="s" stroke="#b000ff" d="M67,328.7H68V335.7H69V339.4H70V342.1H71V344.8H72V344.8H73V342.3H74V339.8H75V333.9H76V328.1H77V322.3H78V315.6H79V308.9H80V302.3H81V299.3H82V296.2H83V293.1H84V295.7H85V300.2H86V310.2H87V320.0H88V325.0H89V330.0H90V335.0H91V339.6H92V344.3H93V348.9H94V351.2H95V352.7H96V349.5H97V346.3H98V342.3H99V337.7H100V333.1H101V328.3H102V322.9H103V317.5H104V312.2H105V309.3H106V306.4H107V303.6H108V303.0H109V302.3H110V301.6H111V301.1H112V300.9H113V300.7H114V300.5H115V301.7H116V304.1H117V306.4H118V308.9H119V311.6H120V314.3H121V316.3H122V316.8H123V317.3H124V314.1H125V310.1H126V305.9H127V301.2H128V296.5H129V291.9H130V287.8H131V284.1H132V280.4H133V276.8H134V273.7H135V270.7H136V267.7H137V264.6H138V261.3H139V258.0H140V255.0H141V255.5H142V256.0H143V258.8H144V263.0H145V267.2H146V271.0H147V273.9H148V276.8H149V277.5H150V274.4H151V271.2H152V264.8H153V258.7H154V256.0H155V248.9H156V244.0H157V242.7H158V241.4H159V234.3H160V232.8H161V233.0H162V233.3H163V233.3H164V230.7H165V228.0H166V225.5H167V223.5H168V221.5H169V221.0H170V222.0H171V225.4H172V230.4H173V234.7H174V238.7H175V228.1H176V209.9H177V187.8H178V172.8H179V163.4H180V158.4H181V158.9H182V161.9H183V163.8H184V165.5H185V168.4H186V172.4H187V177.1H188V182.1H189V185.8H190V189.1H191V191.7H192V193.7H193V192.5H194V191.5H195V196.5H196V201.2H197V205.2H198V208.5H199V211.0H200V209.4H201V204.9H202V199.4H203V193.4H204V187.5H205V181.7H206V177.0H207V173.2H208V169.8H209V168.8H210V167.8H211V167.3H212V167.7H213V168.6H214V173.6H215V178.6H216V183.6H217V187.9H218V192.1H219V196.1H220V200.0H221V203.8H222V207.1H223V210.5H224V209.5H225V207.5H226V201.6H227V195.9H228V190.9H229V192.0H230V198.0H231V188.9H232V176.3H233V169.9H234V169.9H235V174.6H236V179.6H237V184.6H238V189.4H239V193.2H240V197.1H241V201.2H242V205.3H243V208.4H244V210.4H245V212.4H246V214.4H247V216.5H248V218.6H249V218.9H250V217.8H251V216.3H252V211.3H253V206.1H254V200.1H255V194.4H256V189.4H257V186.1H258V184.6H259V185.5H260V188.0H261V209.3H262V229.8H263V233.4H264V246.6H265V251.8H266V267.6H267V261.6H268V271.9H269V282.0H270V284.0H271V286.0H272V287.8H273V284.4H274V281.1H275V277.7H276V273.0H277V268.4H278V263.7H279V259.7H280V255.7H281V251.8H282V250.2H283V248.5H284V247.2H285V252.9H286V263.7H287V280.5H288V291.5H289V302.2H290V308.4H291V314.5H292V319.0H293V321.5H294V323.7H295V321.7H296V319.7H297V317.6H298V314.3H299V311.0H300V307.4H301V301.6H302V295.8H303V291.2H304V287.2H305V285.9H306V285.9H307V285.9H308V285.9H309V286.4H310V292.1H311V303.0H312V312.8H313V318.8H314V323.5H315V326.8H316V330.1H317V333.5H318V336.8H319V341.0H320V354.0H321V360.5H322V363.4H323V358.4H324V353.4H325V348.4H326V343.4H327V338.7H328V334.1H329V329.6H330V325.7H331V321.9H332V319.7H333V319.2H334V321.3H335V325.8H336V331.6H337V338.6H338V344.5H339V349.5H340V354.0H341V358.0H342V361.7H343V365.0H344V367.5H345V364.5H346V361.5H347V358.2H348V354.8H349V351.4H350V347.4H351V343.4H352V339.4H353V335.4H354V331.4H355V327.6H356V324.6H357V321.6H358V318.8H359V317.3H360V316.9H361V323.1H362V333.0H363V346.1H364V360.3H365V367.7H366V372.7H367V375.6H368V378.0H369V380.2H370V382.2H371V384.3H372V387.2H373V384.1H374V379.1H375V373.8H376V368.4H377V363.2H378V358.6H379V353.9H380V349.8H381V346.1H382V342.7H383V341.5H384V340.2H385V342.9H386V347.5H387V356.2H388V374.4H389V427.0H390V469.4H391V510.4H392V533.1H393V540.0H394V547.4H395V557.6H396V573.6H397V558.6H398V543.9H399V529.7H400V519.7H401V509.8H402V502.8H403V495.7H404V486.7H405V477.8H406V470.7H407V471.2H408V476.3H409V483.3H410V490.7H411V511.1H412V540.6H413V556.8H414V569.9H415V578.9H416V587.0H417V594.0H418V601.0H419V608.0H420V616.3H421V626.4H422V637.4H423V628.8H424V608.8H425V591.4H426V575.4H427V560.7H428V546.7H429V534.0H430V522.0H431V512.7H432V504.7H433V500.3H434V498.5H435V506.0H436V527.5H437V560.0H438V586.0H439V601.7H440V605.8H441V600.9H442V588.1H443V581.6H444V584.7H445V594.8H446V606.2H447V613.3H448V616.5H449V600.2H450V580.2H451V563.6H452V548.8H453V535.8H454V523.0H455V512.0H456V501.3H457V494.3H458V487.7H459V484.9H460V482.7H461V481.6H462V487.4H463V494.0H464V498.6H465V502.4H466V506.7H467V508.9H468V509.8H469V508.6H470V510.2H471V514.1H472V515.6H473V513.3H474V509.3H475V503.0H476V493.3H477V488.4H478V474.3H479V460.8H480V451.8H481V443.3H482V438.3H483V433.8H484V433.3H485V433.2H486V435.7H487V438.3H488V441.3H489V444.1H490V445.4H491V446.7H492V448.1H493V449.4H494V450.7H495V452.0H496V452.6H497V453.3H498V453.6H499V451.6H500V449.2H501V444.2H502V439.0H503V433.0H504V427.2H505V422.2H506V417.2H507V414.2H508V411.9H509V410.1H510V411.1H511V413.9H512V426.8H513V442.5H514V450.8H515V452.5H516V453.8H517V453.3H518V453.5H519V457.0H520V460.2H521V462.2H522V463.2H523V459.2H524V455.0H525V449.6H526V444.3H527V438.8H528V432.7H529V426.5H530V421.0H531V416.0H532V411.4H533V408.9H534V409.4H535V411.9H536V414.1H537V417.9H538V419.9H539V421.9H540V423.9H541V425.9H542V426.9H543V428.0H544V433.7H545V443.3H546V453.0H547V459.8H548V455.5H549V454.4H550V455.0H551V455.6H552V454.1H553V449.4H554V435.7H555V431.7H556V427.8H557V425.8H558V423.9H559V424.5H560V428.4H561V436.7H562V453.9H563V461.3H564V463.3H565V463.4H566V462.7H567V462.0H568V462.5H569V463.2H570V466.7H571V469.9H572V469.2H573V465.2H574V459.6H575V453.6H576V447.6H577V441.5H578V435.4H579V429.4H580V423.5H581V418.5H582V413.6H583V410.6H584V407.8H585V407.2H586V408.6H587V412.6H588V421.1H589V428.1H590V433.5H591V429.8H592V424.0H593V420.8H594V425.8H595V430.9H596V432.8H597V432.3H598V431.5H599V427.5H600V423.2H601V416.2H602V409.3H603V403.3H604V397.7H605V395.6H606V393.5H607V392.6H608V392.2H609V392.0H610V393.5H611V399.8H612V409.7H613V421.1H614V432.6H615V437.6H616V439.5H617V436.6H618V438.2H619V442.8H620V448.4H621V452.2H622V454.7H623V452.9H624V448.9H625V443.1H626V437.1H627V431.1H628V425.1H629V419.3H630V415.3H631V411.7H632V410.2H633V408.9H634V408.9H635V409.8H636V417.5H637V429.2H638V438.3H639V441.3H640V444.2H641V446.8H642V451.9H643V459.0H644V466.2H645V467.5H646V464.9H647V451.3H648V459.2H649V454.2H650V446.5H651V427.2H652V423.4H653V419.6H654V417.4H655V416.6H656V415.7H657V414.7H658V413.9H659V413.9H660V414.3H661V416.8H662V421.9H663V429.1H664V436.2H665V439.6H666V441.9H667V444.2H668V446.3H669V448.3H670V450.4H671V452.9H672V455.0H673V455.5H674V455.4H675V452.4H676V448.1H677V438.7H678V432.7H679V427.0H680V422.7H681V418.4H682V414.1H683V409.9H684V410.4H685V411.1H686V417.5H687V423.8H688V429.9H689V431.9H690V434.0H691V438.0H692V442.2H693V449.7H694V457.6H695V466.0H696V469.6H697V463.3H698V457.2H699V451.2H700V445.2H701V439.4H702V433.6H703V428.6H704V423.6H705V419.9H706V416.8H707V413.8H708V412.8H709V412.0H710V413.0H711V414.2H712V418.4H713V421.5H714V424.0H715V426.0H716V427.9H717V427.9H718V428.1H719V431.9H720V435.6H721V438.8H722V438.3H723V437.6H724V434.6H725V431.6H726V428.6H727V425.5H728V422.7H729V420.2H730V417.8H731V416.5H732V415.3H733V415.2H734V415.5H735V416.5H736V423.7H737V432.8H738V442.6H739V450.1H740V458.1H741V466.4H742V472.5H743V478.5H744V484.8H745V493.6H746V495.1H747V489.3H748V483.3H749V477.9H750V476.9H751V475.9H752V474.9H753V474.6H754V474.3H755V474.0H756V473.8H757V473.7H758V473.9H759V477.1H760V480.4H761V484.4H762V488.1H763V489.1H764V490.1H765V491.0H766V491.7H767V492.4H768V493.0H769V493.7H770V494.4H771V495.0H772V495.8H773V496.6H774V495.8H775V493.7H776V491.8H777V490.4H778V489.1H779V487.7H780V485.7H781V483.7H782V481.7H783V480.1H784V478.4H785V479.5H786V481.5H787V484.3H788V487.4H789V490.2H790V491.7H791V493.3H792V495.3H793V497.8H794V500.6H795V504.6H796V509.8H797V521.0H798V537.2H799V536.8H800V524.2H801V514.9H802V508.9H803V503.1H804V498.1H805V493.3H806V489.3H807V485.6H808V483.6H809V482.2H810V483.7H811V485.4H812V487.9H813V490.7H814V494.7H815V498.3H816V499.9"/></g>
<g shape-rendering="crispEdges">
<path d="M63,733.5H820" stroke="#1f1f1f" stroke-width="1" fill="none"/>
<path d="M66.5,737V29" stroke="#1f1f1f" stroke-width="1" fill="none"/>
</g>
<polygon points="819,730.5 824,733.5 819,736.5" fill="#7f1f1f"/>
<polygon points="63.5,31 66.5,26 69.5,31" fill="#7f1f1f"/>
<text class="ax" x="60" y="711.3" text-anchor="end">2</text>
<text class="ax" x="60" y="683.2" text-anchor="end">3</text>
<text class="ax" x="60" y="655.1" text-anchor="end">4</text>
<text class="ax" x="60" y="627.0" text-anchor="end">5</text>
<text class="ax" x="60" y="599.0" text-anchor="end">6</text>
<text class="ax" x="60" y="570.9" text-anchor="end">7</text>
<text class="ax" x="60" y="542.8" text-anchor="end">8</text>
<text class="ax" x="60" y="514.7" text-anchor="end">9</text>
<text class="ax" x="60" y="486.6" text-anchor="end">10</text>
<text class="ax" x="60" y="458.6" text-anchor="end">11</text>
<text class="ax" x="60" y="430.5" text-anchor="end">12</text>
<text class="ax" x="60" y="402.4" text-anchor="end">13</text>
<text class="ax" x="60" y="374.3" text-anchor="end">14</text>
<text class="ax" x="60" y="346.3" text-anchor="end">15</text>
<text class="ax" x="60" y="318.2" text-anchor="end">16</text>
<text class="ax" x="60" y="290.1" text-anchor="end">17</text>
<text class="ax" x="60" y="262.0" text-anchor="end">18</text>
<text class="ax" x="60" y="233.9" text-anchor="end">19</text>
<text class="ax" x="60" y="205.9" text-anchor="end">20</text>
<text class="ax" x="60" y="177.8" text-anchor="end">21</text>
<text class="ax" x="60" y="149.7" text-anchor="end">22</text>
<text class="ax" x="60" y="121.6" text-anchor="end">23</text>
<text class="ax" x="60" y="93.6" text-anchor="end">24</text>
<text class="ax" x="60" y="65.5" text-anchor="end">25</text>
<text class="ax" x="60" y="37.4" text-anchor="end">26</text>
<text class="ax" x="104.8" y="746.3" text-anchor="middle">Fri</text>
<text class="ax" x="154.8" y="746.3" text-anchor="middle">Sun</text>
<text class="ax" x="204.8" y="746.3" text-anchor="middle">Tue</text>
<text class="ax" x="254.8" y="746.3" text-anchor="middle">Thu</text>
<text class="ax" x="304.8" y="746.3" text-anchor="middle">Sat</text>
<text class="ax" x="354.8" y="746.3" text-anchor="middle">Mon</text>
<text class="ax" x="404.8" y="746.3" text-anchor="middle">Wed</text>
<text class="ax" x="454.8" y="746.3" text-anchor="middle">Fri</text>
<text class="ax" x="504.8" y="746.3" text-anchor="middle">Sun</text>
<text class="ax" x="554.8" y="746.3" text-anchor="middle">Tue</text>
<text class="ax" x="604.8" y="746.3" text-anchor="middle">Thu</text>
<text class="ax" x="654.8" y="746.3" text-anchor="middle">Sat</text>
<text class="ax" x="704.8" y="746.3" text-anchor="middle">Mon</text>
<text class="ax" x="754.8" y="746.3" text-anchor="middle">Wed</text>
<text class="ax" x="804.8" y="746.3" text-anchor="middle">Fri</text>
<text class="ti" x="442" y="18" text-anchor="middle">3.5m Tel. Temperatures</text>
<text class="lg" transform="translate(14,381.8) rotate(-90)" text-anchor="middle">Deg.C</text>
<text class="wm" transform="translate(820,5.8) rotate(90)">RRDTOOL / TOBI OETIKER</text>
<rect x="15.5" y="754.5" width="8" height="8.7" fill="#0000ff" stroke="#000" stroke-width="1"/>
<text class="lg" x="30" y="763">Elevator</text>
<rect x="226.5" y="754.5" width="8" height="8.7" fill="#00ffe6" stroke="#000" stroke-width="1"/>
<text class="lg" x="241" y="763">Telescope Base</text>
<rect x="436.9" y="754.5" width="8" height="8.7" fill="#ff0000" stroke="#000" stroke-width="1"/>
<text class="lg" x="451" y="763">Craneway Right</text>
<rect x="647.5" y="754.5" width="8" height="8.7" fill="#e68a00" stroke="#000" stroke-width="1"/>
<text class="lg" x="662" y="763">Craneway Left</text>
<rect x="15.5" y="768.5" width="8" height="8.7" fill="#4ea600" stroke="#000" stroke-width="1"/>
<text class="lg" x="30" y="777">Domefloor</text>
<rect x="226.5" y="768.5" width="8" height="8.7" fill="#00c8ff" stroke="#000" stroke-width="1"/>
<text class="lg" x="241" y="777">Telescope M1</text>
<rect x="436.9" y="768.5" width="8" height="8.7" fill="#ffcc00" stroke="#000" stroke-width="1"/>
<text class="lg" x="451" y="777">Telescope Structure</text>
<rect x="647.5" y="768.5" width="8" height="8.7" fill="#555555" stroke="#000" stroke-width="1"/>
<text class="lg" x="662" y="777">Telescope Top End</text>
<rect x="15.5" y="782.5" width="8" height="8.7" fill="#aaff22" stroke="#000" stroke-width="1"/>
<text class="lg" x="30" y="791">Outside Temperature</text>
<rect x="654.5" y="782.5" width="8" height="8.7" fill="#b000ff" stroke="#000" stroke-width="1"/>
<text class="lg" x="669" y="791">Mean Dome Temperature</text>
</svg></body></html>
